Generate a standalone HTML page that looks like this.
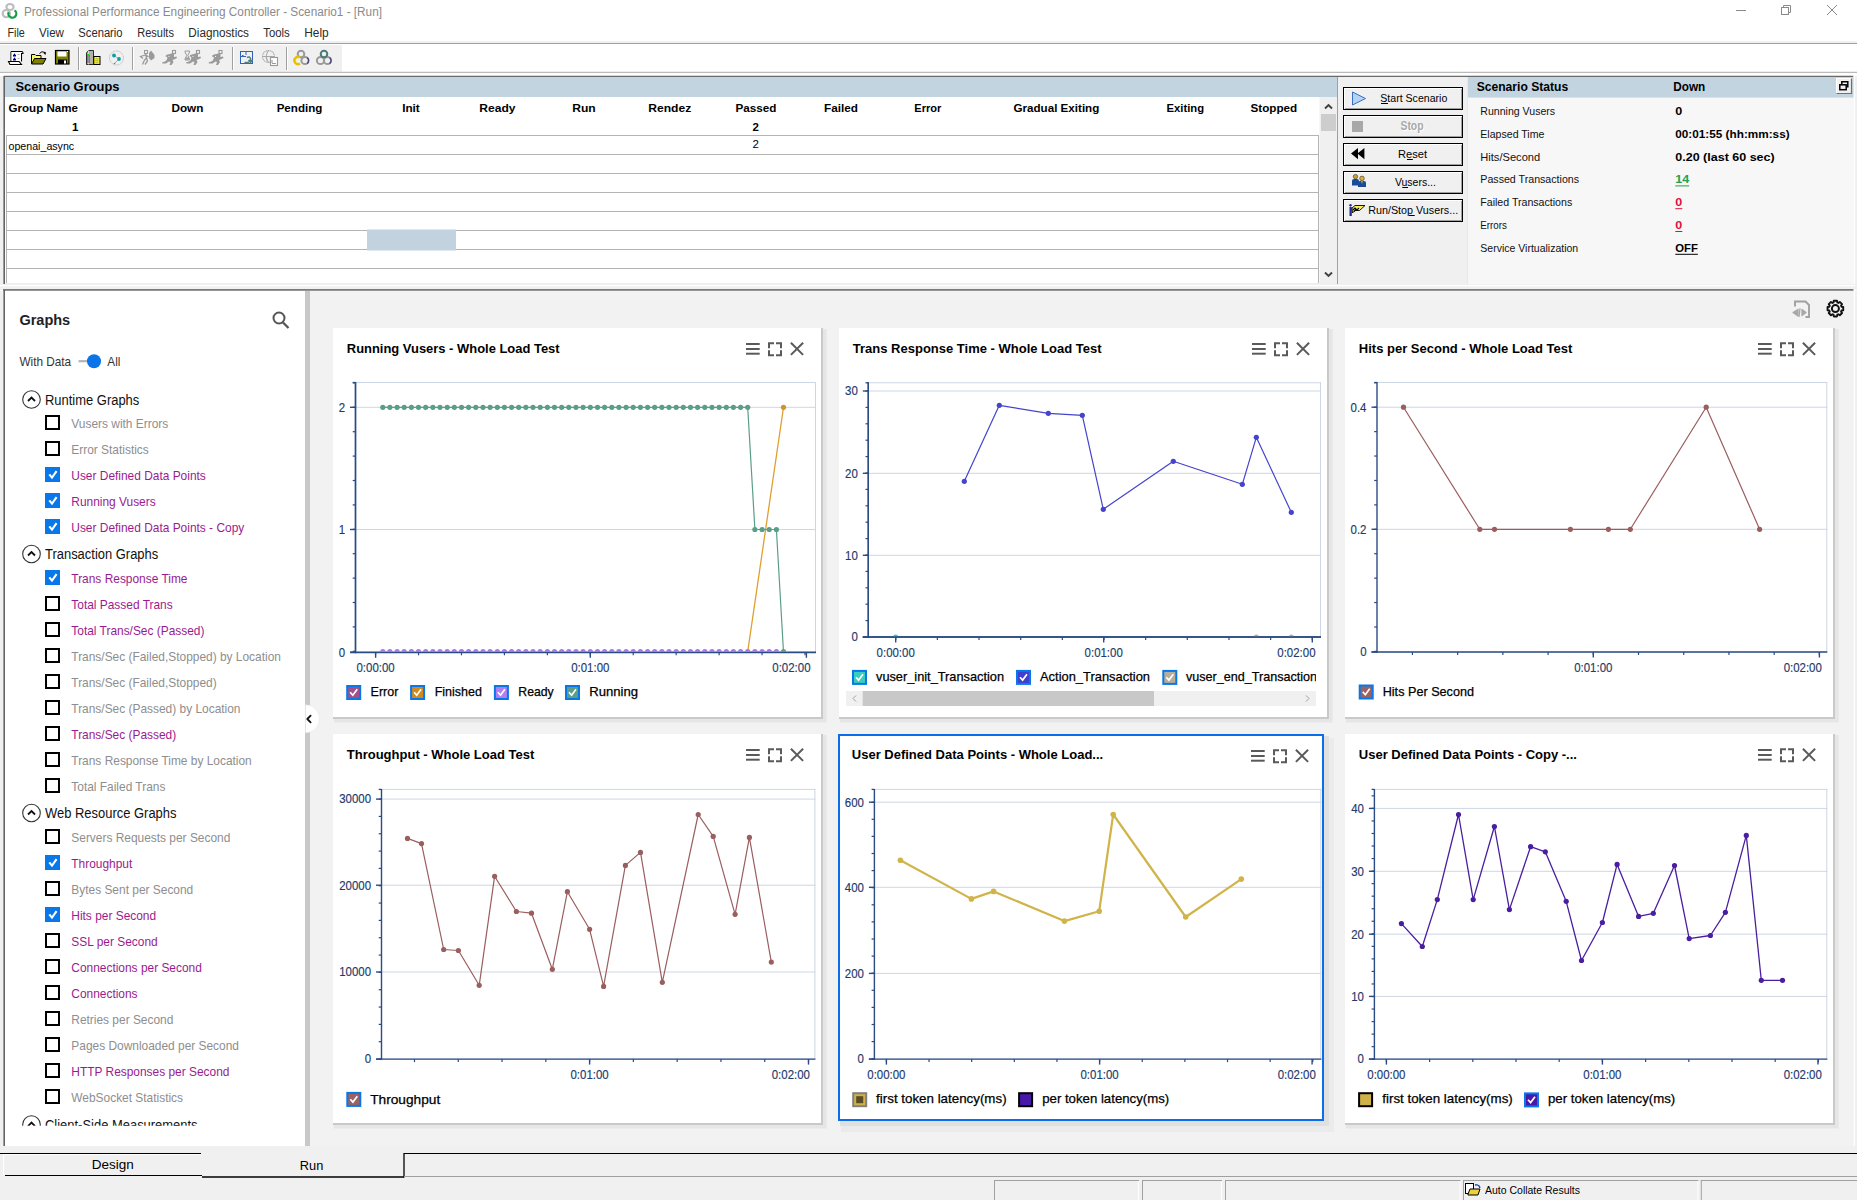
<!DOCTYPE html>
<html><head><meta charset="utf-8"><title>Controller</title>
<style>
html,body{margin:0;padding:0;width:1857px;height:1200px;overflow:hidden;background:#fff;}
svg{display:block;font-family:"Liberation Sans",sans-serif;}
</style></head><body>
<svg width="1857" height="1200" viewBox="0 0 1857 1200">
<rect x="0" y="0" width="1857" height="1200" fill="#ffffff"/>
<g fill="none" stroke-width="2.2"><ellipse cx="10" cy="7" rx="3.6" ry="3" stroke="#bdbdbd"/><circle cx="6.3" cy="13.6" r="3.6" stroke="#bdbdbd"/><path d="M8.6 12.2 A4 4 0 1 0 14.5 10.3" stroke="#10a048"/></g>
<text x="24" y="16" font-size="12.5" fill="#8a8a8a" textLength="358" lengthAdjust="spacingAndGlyphs">Professional Performance Engineering Controller - Scenario1 - [Run]</text>
<line x1="1736" y1="10.5" x2="1746" y2="10.5" stroke="#8a8a8a" stroke-width="1"/>
<g fill="none" stroke="#8a8a8a" stroke-width="1"><rect x="1781.5" y="7.5" width="7" height="7"/><path d="M1783.5 7.5 V5.5 H1790.5 V12.5 H1788.5"/><path d="M1827 5 L1837 15 M1837 5 L1827 15"/></g>
<text x="7.4" y="36.6" font-size="12.5" fill="#2a2a2a" textLength="17.4" lengthAdjust="spacingAndGlyphs">File</text>
<text x="39.1" y="36.6" font-size="12.5" fill="#2a2a2a" textLength="24.8" lengthAdjust="spacingAndGlyphs">View</text>
<text x="78.3" y="36.6" font-size="12.5" fill="#2a2a2a" textLength="44.3" lengthAdjust="spacingAndGlyphs">Scenario</text>
<text x="137.2" y="36.6" font-size="12.5" fill="#2a2a2a" textLength="36.7" lengthAdjust="spacingAndGlyphs">Results</text>
<text x="188.3" y="36.6" font-size="12.5" fill="#2a2a2a" textLength="60.7" lengthAdjust="spacingAndGlyphs">Diagnostics</text>
<text x="263.3" y="36.6" font-size="12.5" fill="#2a2a2a" textLength="26.5" lengthAdjust="spacingAndGlyphs">Tools</text>
<text x="304.2" y="36.6" font-size="12.5" fill="#2a2a2a" textLength="24.5" lengthAdjust="spacingAndGlyphs">Help</text>
<rect x="0" y="41" width="1857" height="2" fill="#f0f0f0"/>
<line x1="0" y1="43.5" x2="1857" y2="43.5" stroke="#a0a0a0" stroke-width="1"/>
<rect x="0" y="45" width="342" height="26.5" fill="#f0f0f0"/>
<line x1="0" y1="72.3" x2="1857" y2="72.3" stroke="#a8a8a8" stroke-width="1"/>
<line x1="78.5" y1="47" x2="78.5" y2="70" stroke="#a0a0a0" stroke-width="1"/>
<line x1="79.5" y1="47" x2="79.5" y2="70" stroke="#ffffff" stroke-width="1"/>
<line x1="132.5" y1="47" x2="132.5" y2="70" stroke="#a0a0a0" stroke-width="1"/>
<line x1="133.5" y1="47" x2="133.5" y2="70" stroke="#ffffff" stroke-width="1"/>
<line x1="232.5" y1="47" x2="232.5" y2="70" stroke="#a0a0a0" stroke-width="1"/>
<line x1="233.5" y1="47" x2="233.5" y2="70" stroke="#ffffff" stroke-width="1"/>
<line x1="286.5" y1="47" x2="286.5" y2="70" stroke="#a0a0a0" stroke-width="1"/>
<line x1="287.5" y1="47" x2="287.5" y2="70" stroke="#ffffff" stroke-width="1"/>
<g><path d="M11 51.5 H21.5 Q23 51.5 23 53 V53.5 H21.5 V61.5" fill="#fff" stroke="#000" stroke-width="1.1"/><path d="M11 51.5 V61" fill="none" stroke="#000" stroke-width="1.1"/><rect x="11.5" y="52" width="9.5" height="9" fill="#fff"/><path d="M8.5 61.5 H19 L21.5 64.5 H10 Z" fill="#fff" stroke="#000" stroke-width="1.1"/><path d="M13 55.5 L14.5 53.3 L16 55.5 Z M13 59.5 L14.5 57.3 L16 59.5 Z" fill="#00008a"/><rect x="13" y="55" width="3" height="1.5" fill="#00008a"/><rect x="13" y="59" width="3" height="1.5" fill="#00008a"/><path d="M17.5 54.5 H19.5 M17.5 58.5 H19.5" stroke="#999" stroke-width="0.8"/><path d="M8 65.5 H23" stroke="#fff" stroke-width="1"/></g>
<g><path d="M31.5 54.5 H35 L36 55.5 H41 V63.5 H31.5 Z" fill="#ffff60" stroke="#000" stroke-width="1"/><path d="M33 55.5 L35 57 M32.5 58 L34 59.5" stroke="#c8c880" stroke-width="0.6"/><path d="M31.5 64 L34.5 58.5 H46 L43 64 Z" fill="#808000" stroke="#000" stroke-width="1"/><path d="M39.5 53.5 Q41.5 50.5 45 52.5" fill="none" stroke="#000" stroke-width="1"/><path d="M43.5 53 L46 52 L45.5 55 Z" fill="#000"/></g>
<g><rect x="55.5" y="50.5" width="13.5" height="13.5" fill="#808000" stroke="#000" stroke-width="1.2"/><rect x="57.5" y="51.5" width="9" height="5" fill="#fff"/><rect x="67" y="51" width="1" height="1" fill="#fff"/><rect x="58" y="59.5" width="9" height="4.5" fill="#000"/><rect x="64" y="60.5" width="2" height="3" fill="#fff"/></g>
<g><path d="M86.5 53 L88.5 50.5 H93.5 V64.5 H86.5 Z" fill="#b0b0b0" stroke="#000" stroke-width="0.8"/><path d="M88.5 50.5 V64.5" stroke="#e0e0e0" stroke-width="0.8"/><path d="M87 56 H90 M87 58 H90 M87 60 H90 M87 62 H90" stroke="#333" stroke-width="0.8"/><rect x="87.3" y="54" width="2" height="1.2" fill="#00e000"/><rect x="93.8" y="56.5" width="6.2" height="8" fill="#ffff00" stroke="#000" stroke-width="1"/><path d="M95.3 58.8 H98.5 M95.3 60.8 H98.5 M95.3 62.8 H98.5" stroke="#888" stroke-width="0.8"/></g>
<g fill="none"><circle cx="116.5" cy="58" r="7" stroke="#b8b8b8" stroke-width="1" stroke-dasharray="1 0.6"/><path d="M114 55.5 L119 59 L114.5 63.5" stroke="#70b0b0" stroke-width="0.8"/><circle cx="114" cy="55.5" r="1.9" fill="#10a0a0"/><circle cx="119" cy="59" r="1.9" fill="#10a0a0"/><circle cx="114.5" cy="63.5" r="0.8" fill="#10a0a0"/></g>
<g transform="translate(140,50)"><rect x="4.5" y="0.5" width="3" height="3" fill="none" stroke="#9a9a9a" stroke-width="1"/><path d="M5.5 4 L6.5 8 L4.5 10 L2.5 14.5 M6.5 8 L7.5 11 L5 14.5 M5.5 5 L0.5 6.5 L3 8.5 M6 5 L8.5 7" fill="none" stroke="#9a9a9a" stroke-width="1.3"/><path d="M11 0.5 L14.5 5 L14.5 8 L11 10.5 L9 8 L9 3 Z" fill="#9a9a9a"/></g>
<g transform="translate(162,50)"><rect x="10.5" y="0.5" width="3" height="3" fill="none" stroke="#9a9a9a" stroke-width="1.1"/><path d="M9.5 3.5 L12 4 L12 7 L14.5 6.5 L15 8 L12 9.5 L10.5 10 L11.5 12 L9.5 15 L7.5 15 L8.5 12 L7 11.5 L4 13.5 L0.5 13.5 L0 12.5 L4 11 L5.5 8 L4.5 6.5 L3.5 7 L4 5 Z" fill="#9a9a9a"/><rect x="6.5" y="6" width="1" height="1" fill="#f0f0f0"/></g>
<g transform="translate(186,50)"><rect x="10.5" y="0.5" width="3" height="3" fill="none" stroke="#9a9a9a" stroke-width="1.1"/><path d="M9.5 3.5 L12 4 L12 7 L14.5 6.5 L15 8 L12 9.5 L10.5 10 L11.5 12 L9.5 15 L7.5 15 L8.5 12 L7 11.5 L4 13.5 L0.5 13.5 L0 12.5 L4 11 L5.5 8 L4.5 6.5 L3.5 7 L4 5 Z" fill="#9a9a9a"/><rect x="6.5" y="6" width="1" height="1" fill="#f0f0f0"/></g>
<g transform="translate(208.5,50)"><rect x="10.5" y="0.5" width="3" height="3" fill="none" stroke="#9a9a9a" stroke-width="1.1"/><path d="M9.5 3.5 L12 4 L12 7 L14.5 6.5 L15 8 L12 9.5 L10.5 10 L11.5 12 L9.5 15 L7.5 15 L8.5 12 L7 11.5 L4 13.5 L0.5 13.5 L0 12.5 L4 11 L5.5 8 L4.5 6.5 L3.5 7 L4 5 Z" fill="#9a9a9a"/><rect x="6.5" y="6" width="1" height="1" fill="#f0f0f0"/></g>
<g fill="#9a9a9a"><path d="M185 51 H189.5 V52 L187.8 55.5 L189.5 59 V60 H185 V59 L186.7 55.5 L185 52 Z" fill="none" stroke="#9a9a9a" stroke-width="1"/><rect x="185.5" y="57.5" width="3.5" height="2"/></g>
<g fill="none"><rect x="240.5" y="51.5" width="12" height="12" stroke="#3060c0" stroke-width="1"/><path d="M240.5 56.5 H246 M246 51.5 V55" stroke="#3060c0" stroke-width="1"/><rect x="242" y="55" width="1.5" height="1.5" fill="#3060c0"/><path d="M244.5 62.5 H249 M247 57.5 Q249.5 56 250.5 58.5 V62 M252.5 60 L250.5 62.5 L248.5 60" stroke="#508080" stroke-width="1.6"/></g>
<g fill="none" stroke="#a8a8a8" stroke-width="1.1"><circle cx="268.5" cy="56.5" r="6" stroke-dasharray="1.2 0.6"/><path d="M268.5 50.5 Q264 56.5 268.5 62.5 M263 56.5 H274"/><rect x="270.5" y="57.5" width="7" height="8" fill="#fff" stroke="#999"/><path d="M272 63.5 H276 M272 60 V63" stroke="#999"/></g>
<g fill="none" stroke-width="2"><circle cx="301" cy="54" r="3.3" stroke="#9a9a9a"/><circle cx="305" cy="60.5" r="3.6" stroke="#9a9a9a"/><path d="M300 57.5 A3.6 3.6 0 1 0 300 63.5" stroke="#e8c000" stroke-width="2.4"/><path d="M307 57.5 A3.6 3.6 0 0 1 307 63.5" stroke="#404080" stroke-width="1.2"/></g>
<g fill="none" stroke-width="2"><circle cx="320.5" cy="60.5" r="3.6" stroke="#9a9a9a"/><circle cx="327.5" cy="60.5" r="3.6" stroke="#9a9a9a"/><path d="M329.5 57.5 A3.6 3.6 0 0 1 329.5 63.5" stroke="#404080" stroke-width="1.2"/><circle cx="324" cy="54" r="3.3" stroke="#4a7a7a"/></g>
<rect x="0" y="76" width="1857" height="214" fill="#f0f0f0"/>
<rect x="0" y="73" width="1857" height="3" fill="#ffffff"/>
<line x1="4" y1="76.3" x2="1853.5" y2="76.3" stroke="#6a6a6a" stroke-width="1.3"/>
<rect x="1853.5" y="76" width="1.5" height="214" fill="#ffffff"/>
<line x1="4.2" y1="76" x2="4.2" y2="284" stroke="#646464" stroke-width="1.6"/>
<rect x="5" y="77" width="1333" height="206" fill="#ffffff"/>
<rect x="5" y="77" width="1333" height="20" fill="#c2d4e0"/>
<text x="15.5" y="90.8" font-size="13" fill="#000" font-weight="bold" textLength="104" lengthAdjust="spacingAndGlyphs">Scenario Groups</text>
<text x="8.5" y="112.3" font-size="11.5" fill="#000" font-weight="bold" textLength="69.5" lengthAdjust="spacingAndGlyphs">Group Name</text>
<text x="187.4" y="112.3" font-size="11.5" fill="#000" font-weight="bold" text-anchor="middle" textLength="32" lengthAdjust="spacingAndGlyphs">Down</text>
<text x="299.5" y="112.3" font-size="11.5" fill="#000" font-weight="bold" text-anchor="middle" textLength="45.7" lengthAdjust="spacingAndGlyphs">Pending</text>
<text x="411" y="112.3" font-size="11.5" fill="#000" font-weight="bold" text-anchor="middle" textLength="17.6" lengthAdjust="spacingAndGlyphs">Init</text>
<text x="497.4" y="112.3" font-size="11.5" fill="#000" font-weight="bold" text-anchor="middle" textLength="36.2" lengthAdjust="spacingAndGlyphs">Ready</text>
<text x="584" y="112.3" font-size="11.5" fill="#000" font-weight="bold" text-anchor="middle" textLength="23.5" lengthAdjust="spacingAndGlyphs">Run</text>
<text x="669.7" y="112.3" font-size="11.5" fill="#000" font-weight="bold" text-anchor="middle" textLength="43" lengthAdjust="spacingAndGlyphs">Rendez</text>
<text x="755.9" y="112.3" font-size="11.5" fill="#000" font-weight="bold" text-anchor="middle" textLength="41" lengthAdjust="spacingAndGlyphs">Passed</text>
<text x="841" y="112.3" font-size="11.5" fill="#000" font-weight="bold" text-anchor="middle" textLength="34" lengthAdjust="spacingAndGlyphs">Failed</text>
<text x="927.8" y="112.3" font-size="11.5" fill="#000" font-weight="bold" text-anchor="middle" textLength="27" lengthAdjust="spacingAndGlyphs">Error</text>
<text x="1056.4" y="112.3" font-size="11.5" fill="#000" font-weight="bold" text-anchor="middle" textLength="85.8" lengthAdjust="spacingAndGlyphs">Gradual Exiting</text>
<text x="1185.3" y="112.3" font-size="11.5" fill="#000" font-weight="bold" text-anchor="middle" textLength="37.5" lengthAdjust="spacingAndGlyphs">Exiting</text>
<text x="1273.9" y="112.3" font-size="11.5" fill="#000" font-weight="bold" text-anchor="middle" textLength="46.7" lengthAdjust="spacingAndGlyphs">Stopped</text>
<text x="75.3" y="130.7" font-size="11.5" fill="#000" font-weight="bold" text-anchor="middle">1</text>
<text x="755.6" y="130.9" font-size="11.5" fill="#000" font-weight="bold" text-anchor="middle">2</text>
<line x1="6.5" y1="135.5" x2="1318.5" y2="135.5" stroke="#b4b4b4" stroke-width="1"/>
<line x1="6.5" y1="154.5" x2="1318.5" y2="154.5" stroke="#b4b4b4" stroke-width="1"/>
<line x1="6.5" y1="173.5" x2="1318.5" y2="173.5" stroke="#b4b4b4" stroke-width="1"/>
<line x1="6.5" y1="192.5" x2="1318.5" y2="192.5" stroke="#b4b4b4" stroke-width="1"/>
<line x1="6.5" y1="211.5" x2="1318.5" y2="211.5" stroke="#b4b4b4" stroke-width="1"/>
<line x1="6.5" y1="230.5" x2="1318.5" y2="230.5" stroke="#b4b4b4" stroke-width="1"/>
<line x1="6.5" y1="249.5" x2="1318.5" y2="249.5" stroke="#b4b4b4" stroke-width="1"/>
<line x1="6.5" y1="268.5" x2="1318.5" y2="268.5" stroke="#b4b4b4" stroke-width="1"/>
<line x1="6.5" y1="135" x2="6.5" y2="283" stroke="#b4b4b4" stroke-width="1"/>
<line x1="1318.5" y1="135" x2="1318.5" y2="283" stroke="#b4b4b4" stroke-width="1"/>
<rect x="367" y="229.5" width="89" height="21" fill="#c2d3df"/>
<text x="8.5" y="150.2" font-size="11.5" fill="#000" textLength="65.7" lengthAdjust="spacingAndGlyphs">openai_async</text>
<text x="755.6" y="147.6" font-size="11.5" fill="#000" text-anchor="middle">2</text>
<rect x="1319.5" y="97" width="17.5" height="186" fill="#f0f0f0"/>
<rect x="1321" y="114" width="15" height="17" fill="#cdcdcd"/>
<path d="M1325 108.5 L1328.5 105 L1332 108.5" fill="none" stroke="#404040" stroke-width="1.9"/>
<path d="M1325 272.5 L1328.5 276 L1332 272.5" fill="none" stroke="#404040" stroke-width="1.9"/>
<rect x="5" y="283" width="1333" height="3" fill="#eeeeee"/>
<line x1="1337.5" y1="77" x2="1337.5" y2="285" stroke="#a0a0a0" stroke-width="1"/>
<rect x="1343.5" y="87.5" width="119" height="22" fill="#f0f0f0" stroke="#000" stroke-width="1"/>
<line x1="1344.5" y1="88.5" x2="1461.5" y2="88.5" stroke="#ffffff" stroke-width="1"/>
<line x1="1344.5" y1="88.5" x2="1344.5" y2="108.5" stroke="#ffffff" stroke-width="1"/>
<line x1="1345" y1="108.5" x2="1461.5" y2="108.5" stroke="#a0a0a0" stroke-width="1"/>
<line x1="1461.5" y1="89" x2="1461.5" y2="108.5" stroke="#a0a0a0" stroke-width="1"/>
<text x="1413.8" y="102" font-size="11.5" fill="#000" text-anchor="middle" textLength="67" lengthAdjust="spacingAndGlyphs">Start Scenario</text>
<path d="M1352.5 92 L1365.5 98.5 L1352.5 105 Z" fill="#b4d2f4" stroke="#3a70c0" stroke-width="1" stroke-linejoin="round"/>
<line x1="1381" y1="103.5" x2="1388" y2="103.5" stroke="#000" stroke-width="1"/>
<rect x="1343.5" y="115.5" width="119" height="22" fill="#f0f0f0" stroke="#000" stroke-width="1"/>
<line x1="1344.5" y1="116.5" x2="1461.5" y2="116.5" stroke="#ffffff" stroke-width="1"/>
<line x1="1344.5" y1="116.5" x2="1344.5" y2="136.5" stroke="#ffffff" stroke-width="1"/>
<line x1="1345" y1="136.5" x2="1461.5" y2="136.5" stroke="#a0a0a0" stroke-width="1"/>
<line x1="1461.5" y1="117" x2="1461.5" y2="136.5" stroke="#a0a0a0" stroke-width="1"/>
<text x="1413" y="131" font-size="12" fill="#ffffff" font-weight="bold" text-anchor="middle" textLength="23" lengthAdjust="spacingAndGlyphs">Stop</text>
<text x="1412" y="130" font-size="12" fill="#a8a8a8" font-weight="bold" text-anchor="middle" textLength="23" lengthAdjust="spacingAndGlyphs">Stop</text>
<rect x="1352" y="121" width="11" height="11" fill="#a8a8a8"/>
<rect x="1343.5" y="143.5" width="119" height="22" fill="#f0f0f0" stroke="#000" stroke-width="1"/>
<line x1="1344.5" y1="144.5" x2="1461.5" y2="144.5" stroke="#ffffff" stroke-width="1"/>
<line x1="1344.5" y1="144.5" x2="1344.5" y2="164.5" stroke="#ffffff" stroke-width="1"/>
<line x1="1345" y1="164.5" x2="1461.5" y2="164.5" stroke="#a0a0a0" stroke-width="1"/>
<line x1="1461.5" y1="145" x2="1461.5" y2="164.5" stroke="#a0a0a0" stroke-width="1"/>
<text x="1412.5" y="158" font-size="11.5" fill="#000" text-anchor="middle" textLength="29" lengthAdjust="spacingAndGlyphs">Reset</text>
<path d="M1358 148 L1351 153.6 L1358 159.3 Z M1364.4 148 L1357.4 153.6 L1364.4 159.3 Z" fill="#000"/>
<line x1="1407" y1="159.5" x2="1412.8" y2="159.5" stroke="#000" stroke-width="1"/>
<rect x="1343.5" y="171.5" width="119" height="22" fill="#f0f0f0" stroke="#000" stroke-width="1"/>
<line x1="1344.5" y1="172.5" x2="1461.5" y2="172.5" stroke="#ffffff" stroke-width="1"/>
<line x1="1344.5" y1="172.5" x2="1344.5" y2="192.5" stroke="#ffffff" stroke-width="1"/>
<line x1="1345" y1="192.5" x2="1461.5" y2="192.5" stroke="#a0a0a0" stroke-width="1"/>
<line x1="1461.5" y1="173" x2="1461.5" y2="192.5" stroke="#a0a0a0" stroke-width="1"/>
<text x="1415.4" y="186" font-size="11.5" fill="#000" text-anchor="middle" textLength="41" lengthAdjust="spacingAndGlyphs">Vusers...</text>
<g><path d="M1352 185.5 V180.5 Q1352 179 1354 179 H1357 Q1359 179 1359 180.5 V185.5 Z" fill="#1a4a9a"/><circle cx="1355.5" cy="176.6" r="2.2" fill="#c8a030" stroke="#403010" stroke-width="0.6"/><path d="M1358 187 V182.5 Q1358 181 1360 181 H1364 Q1366 181 1366 182.5 V187 Z" fill="#1a4a9a"/><circle cx="1362" cy="178.4" r="2.3" fill="#d8b040" stroke="#403010" stroke-width="0.6"/><path d="M1361.2 181 L1362 184 L1362.8 181 Z" fill="#e8c040"/></g>
<line x1="1402.3" y1="187.5" x2="1408" y2="187.5" stroke="#000" stroke-width="1"/>
<rect x="1343.5" y="199.5" width="119" height="22" fill="#f0f0f0" stroke="#000" stroke-width="1"/>
<line x1="1344.5" y1="200.5" x2="1461.5" y2="200.5" stroke="#ffffff" stroke-width="1"/>
<line x1="1344.5" y1="200.5" x2="1344.5" y2="220.5" stroke="#ffffff" stroke-width="1"/>
<line x1="1345" y1="220.5" x2="1461.5" y2="220.5" stroke="#a0a0a0" stroke-width="1"/>
<line x1="1461.5" y1="201" x2="1461.5" y2="220.5" stroke="#a0a0a0" stroke-width="1"/>
<text x="1413.2" y="214" font-size="11.5" fill="#000" text-anchor="middle" textLength="90" lengthAdjust="spacingAndGlyphs">Run/Stop Vusers...</text>
<g><circle cx="1350.5" cy="205.2" r="1.2" fill="#1a2a9a"/><path d="M1349.5 207 H1351.8 V216 H1349.5 Z" fill="#1a2a9a"/><path d="M1352 208 L1355 205.5 H1365 L1359.5 210.5 H1355 L1352.5 213 Z" fill="#f8f060" stroke="#000" stroke-width="0.9"/><path d="M1353 210 L1355 208 L1357 210 L1359 208 M1354 211.5 L1356 209.5" stroke="#000" stroke-width="1.1" fill="none"/></g>
<line x1="1409" y1="215.5" x2="1414.7" y2="215.5" stroke="#000" stroke-width="1"/>
<rect x="1468" y="77" width="385.5" height="207" fill="#f7f7f7"/>
<rect x="1468" y="77" width="385.5" height="20.6" fill="#c2d4e0"/>
<line x1="1467.5" y1="77" x2="1467.5" y2="284" stroke="#e8e8e8" stroke-width="1"/>
<text x="1476.7" y="91" font-size="12.5" fill="#000" font-weight="bold" textLength="91.5" lengthAdjust="spacingAndGlyphs">Scenario Status</text>
<text x="1673.3" y="91" font-size="12.5" fill="#000" font-weight="bold" textLength="32" lengthAdjust="spacingAndGlyphs">Down</text>
<g fill="none" stroke="#000" stroke-width="1"><rect x="1836" y="78" width="16" height="16" fill="#f0f0f0" stroke="none"/><path d="M1836.5 93.5 V78.5 H1851.5" stroke="#ffffff"/><path d="M1836.5 93.5 H1851.5 V78.5" stroke="#707070" stroke-width="1.2"/><rect x="1839.8" y="84.8" width="6.4" height="4.9" stroke-width="1.5"/><path d="M1841.8 84.5 V81.8 H1847.8 V86.8 H1846.5" stroke-width="1.5"/></g>
<text x="1480.3" y="115.0" font-size="11.5" fill="#111" textLength="74.8" lengthAdjust="spacingAndGlyphs">Running Vusers</text>
<text x="1675.3" y="115.0" font-size="11.5" fill="#000" font-weight="bold" textLength="7" lengthAdjust="spacingAndGlyphs">0</text>
<text x="1480.3" y="137.8" font-size="11.5" fill="#111" textLength="64.1" lengthAdjust="spacingAndGlyphs">Elapsed Time</text>
<text x="1675.3" y="137.8" font-size="11.5" fill="#000" font-weight="bold" textLength="114.3" lengthAdjust="spacingAndGlyphs">00:01:55 (hh:mm:ss)</text>
<text x="1480.3" y="160.6" font-size="11.5" fill="#111" textLength="59.9" lengthAdjust="spacingAndGlyphs">Hits/Second</text>
<text x="1675.3" y="160.6" font-size="11.5" fill="#000" font-weight="bold" textLength="99.4" lengthAdjust="spacingAndGlyphs">0.20 (last 60 sec)</text>
<text x="1480.3" y="183.4" font-size="11.5" fill="#111" textLength="98.8" lengthAdjust="spacingAndGlyphs">Passed Transactions</text>
<text x="1675.3" y="183.4" font-size="11.5" fill="#22a050" font-weight="bold" textLength="13.9" lengthAdjust="spacingAndGlyphs">14</text>
<line x1="1675.3" y1="185.9" x2="1689.2" y2="185.9" stroke="#22a050" stroke-width="1"/>
<text x="1480.3" y="206.2" font-size="11.5" fill="#111" textLength="91.9" lengthAdjust="spacingAndGlyphs">Failed Transactions</text>
<text x="1675.3" y="206.2" font-size="11.5" fill="#e0103a" font-weight="bold" textLength="7" lengthAdjust="spacingAndGlyphs">0</text>
<line x1="1675.3" y1="208.7" x2="1682.3" y2="208.7" stroke="#e0103a" stroke-width="1"/>
<text x="1480.3" y="229.0" font-size="11.5" fill="#111" textLength="26.7" lengthAdjust="spacingAndGlyphs">Errors</text>
<text x="1675.3" y="229.0" font-size="11.5" fill="#e0103a" font-weight="bold" textLength="7" lengthAdjust="spacingAndGlyphs">0</text>
<line x1="1675.3" y1="231.5" x2="1682.3" y2="231.5" stroke="#e0103a" stroke-width="1"/>
<text x="1480.3" y="251.8" font-size="11.5" fill="#111" textLength="97.9" lengthAdjust="spacingAndGlyphs">Service Virtualization</text>
<text x="1675.3" y="251.8" font-size="11.5" fill="#000" font-weight="bold" textLength="22.6" lengthAdjust="spacingAndGlyphs">OFF</text>
<line x1="1675.3" y1="254.3" x2="1697.8999999999999" y2="254.3" stroke="#000" stroke-width="1"/>
<rect x="0" y="284" width="1857" height="5" fill="#f0f0f0"/>
<line x1="0" y1="285.6" x2="1855" y2="285.6" stroke="#ffffff" stroke-width="1.2"/>
<line x1="3" y1="290" x2="1853.5" y2="290" stroke="#555555" stroke-width="1.6"/>
<rect x="0" y="290.8" width="1857" height="861.2" fill="#f0f0f0"/>
<rect x="4" y="291" width="301" height="855" fill="#ffffff"/>
<line x1="4.2" y1="290" x2="4.2" y2="1146" stroke="#646464" stroke-width="1.6"/>
<rect x="305" y="291" width="5" height="855" fill="#c8c8c8"/>
<text x="19.4" y="325" font-size="14.5" fill="#222" font-weight="bold">Graphs</text>
<g fill="none" stroke="#555" stroke-width="2"><circle cx="279" cy="318" r="5.5"/><path d="M283 322.5 L288.5 328" stroke-width="2.3"/></g>
<text x="19.4" y="365.7" font-size="13" fill="#333" textLength="51.76" lengthAdjust="spacingAndGlyphs">With Data</text>
<line x1="78.5" y1="361.2" x2="92" y2="361.2" stroke="#b4b4b4" stroke-width="2.2"/>
<circle cx="94" cy="361.2" r="7" fill="#0a74e8"/>
<text x="107.3" y="365.7" font-size="13" fill="#333" textLength="13.1" lengthAdjust="spacingAndGlyphs">All</text>
<circle cx="31.5" cy="399.5" r="8.8" fill="#fff" stroke="#333" stroke-width="1.1"/>
<path d="M28 401.0 L31.5 397.5 L35 401.0" fill="none" stroke="#111" stroke-width="1.8"/>
<text x="45" y="404.5" font-size="14" fill="#111" textLength="94.29" lengthAdjust="spacingAndGlyphs">Runtime Graphs</text>
<rect x="46" y="416" width="13" height="13" fill="#fff" stroke="#000" stroke-width="2"/>
<text x="71.3" y="428" font-size="13" fill="#8e8e8e" textLength="96.94" lengthAdjust="spacingAndGlyphs">Vusers with Errors</text>
<rect x="46" y="442" width="13" height="13" fill="#fff" stroke="#000" stroke-width="2"/>
<text x="71.3" y="454" font-size="13" fill="#8e8e8e" textLength="77.5" lengthAdjust="spacingAndGlyphs">Error Statistics</text>
<rect x="45" y="467" width="15" height="15" fill="#0877ea"/>
<path d="M49.3 474.3 L52 477.6 L56.6 471.2" fill="none" stroke="#fff" stroke-width="2.1"/>
<text x="71.3" y="480" font-size="13" fill="#9b1b8f" textLength="134.51" lengthAdjust="spacingAndGlyphs">User Defined Data Points</text>
<rect x="45" y="493" width="15" height="15" fill="#0877ea"/>
<path d="M49.3 500.3 L52 503.6 L56.6 497.2" fill="none" stroke="#fff" stroke-width="2.1"/>
<text x="71.3" y="506" font-size="13" fill="#9b1b8f" textLength="84.38" lengthAdjust="spacingAndGlyphs">Running Vusers</text>
<rect x="45" y="519" width="15" height="15" fill="#0877ea"/>
<path d="M49.3 526.3 L52 529.6 L56.6 523.2" fill="none" stroke="#fff" stroke-width="2.1"/>
<text x="71.3" y="532" font-size="13" fill="#9b1b8f" textLength="172.93" lengthAdjust="spacingAndGlyphs">User Defined Data Points - Copy</text>
<circle cx="31.5" cy="554" r="8.8" fill="#fff" stroke="#333" stroke-width="1.1"/>
<path d="M28 555.5 L31.5 552 L35 555.5" fill="none" stroke="#111" stroke-width="1.8"/>
<text x="45" y="559" font-size="14" fill="#111" textLength="113.25" lengthAdjust="spacingAndGlyphs">Transaction Graphs</text>
<rect x="45" y="570" width="15" height="15" fill="#0877ea"/>
<path d="M49.3 577.3 L52 580.6 L56.6 574.2" fill="none" stroke="#fff" stroke-width="2.1"/>
<text x="71.3" y="583" font-size="13" fill="#9b1b8f" textLength="116.17" lengthAdjust="spacingAndGlyphs">Trans Response Time</text>
<rect x="46" y="597" width="13" height="13" fill="#fff" stroke="#000" stroke-width="2"/>
<text x="71.3" y="609" font-size="13" fill="#9b1b8f" textLength="101.38" lengthAdjust="spacingAndGlyphs">Total Passed Trans</text>
<rect x="46" y="623" width="13" height="13" fill="#fff" stroke="#000" stroke-width="2"/>
<text x="71.3" y="635" font-size="13" fill="#9b1b8f" textLength="133.18" lengthAdjust="spacingAndGlyphs">Total Trans/Sec (Passed)</text>
<rect x="46" y="649" width="13" height="13" fill="#fff" stroke="#000" stroke-width="2"/>
<text x="71.3" y="661" font-size="13" fill="#8e8e8e" textLength="209.62" lengthAdjust="spacingAndGlyphs">Trans/Sec (Failed,Stopped) by Location</text>
<rect x="46" y="675" width="13" height="13" fill="#fff" stroke="#000" stroke-width="2"/>
<text x="71.3" y="687" font-size="13" fill="#8e8e8e" textLength="145.33" lengthAdjust="spacingAndGlyphs">Trans/Sec (Failed,Stopped)</text>
<rect x="46" y="701" width="13" height="13" fill="#fff" stroke="#000" stroke-width="2"/>
<text x="71.3" y="713" font-size="13" fill="#8e8e8e" textLength="169.19" lengthAdjust="spacingAndGlyphs">Trans/Sec (Passed) by Location</text>
<rect x="46" y="727" width="13" height="13" fill="#fff" stroke="#000" stroke-width="2"/>
<text x="71.3" y="739" font-size="13" fill="#9b1b8f" textLength="104.9" lengthAdjust="spacingAndGlyphs">Trans/Sec (Passed)</text>
<rect x="46" y="753" width="13" height="13" fill="#fff" stroke="#000" stroke-width="2"/>
<text x="71.3" y="765" font-size="13" fill="#8e8e8e" textLength="180.46" lengthAdjust="spacingAndGlyphs">Trans Response Time by Location</text>
<rect x="46" y="779" width="13" height="13" fill="#fff" stroke="#000" stroke-width="2"/>
<text x="71.3" y="791" font-size="13" fill="#8e8e8e" textLength="94.09" lengthAdjust="spacingAndGlyphs">Total Failed Trans</text>
<circle cx="31.5" cy="813" r="8.8" fill="#fff" stroke="#333" stroke-width="1.1"/>
<path d="M28 814.5 L31.5 811 L35 814.5" fill="none" stroke="#111" stroke-width="1.8"/>
<text x="45" y="818" font-size="14" fill="#111" textLength="131.48" lengthAdjust="spacingAndGlyphs">Web Resource Graphs</text>
<rect x="46" y="830" width="13" height="13" fill="#fff" stroke="#000" stroke-width="2"/>
<text x="71.3" y="842" font-size="13" fill="#8e8e8e" textLength="159.03" lengthAdjust="spacingAndGlyphs">Servers Requests per Second</text>
<rect x="45" y="855" width="15" height="15" fill="#0877ea"/>
<path d="M49.3 862.3 L52 865.6 L56.6 859.2" fill="none" stroke="#fff" stroke-width="2.1"/>
<text x="71.3" y="868" font-size="13" fill="#9b1b8f" textLength="60.97" lengthAdjust="spacingAndGlyphs">Throughput</text>
<rect x="46" y="882" width="13" height="13" fill="#fff" stroke="#000" stroke-width="2"/>
<text x="71.3" y="894" font-size="13" fill="#8e8e8e" textLength="121.94" lengthAdjust="spacingAndGlyphs">Bytes Sent per Second</text>
<rect x="45" y="907" width="15" height="15" fill="#0877ea"/>
<path d="M49.3 914.3 L52 917.6 L56.6 911.2" fill="none" stroke="#fff" stroke-width="2.1"/>
<text x="71.3" y="920" font-size="13" fill="#9b1b8f" textLength="84.82" lengthAdjust="spacingAndGlyphs">Hits per Second</text>
<rect x="46" y="934" width="13" height="13" fill="#fff" stroke="#000" stroke-width="2"/>
<text x="71.3" y="946" font-size="13" fill="#9b1b8f" textLength="86.38" lengthAdjust="spacingAndGlyphs">SSL per Second</text>
<rect x="46" y="960" width="13" height="13" fill="#fff" stroke="#000" stroke-width="2"/>
<text x="71.3" y="972" font-size="13" fill="#9b1b8f" textLength="130.56" lengthAdjust="spacingAndGlyphs">Connections per Second</text>
<rect x="46" y="986" width="13" height="13" fill="#fff" stroke="#000" stroke-width="2"/>
<text x="71.3" y="998" font-size="13" fill="#9b1b8f" textLength="66.27" lengthAdjust="spacingAndGlyphs">Connections</text>
<rect x="46" y="1012" width="13" height="13" fill="#fff" stroke="#000" stroke-width="2"/>
<text x="71.3" y="1024" font-size="13" fill="#8e8e8e" textLength="102.05" lengthAdjust="spacingAndGlyphs">Retries per Second</text>
<rect x="46" y="1038" width="13" height="13" fill="#fff" stroke="#000" stroke-width="2"/>
<text x="71.3" y="1050" font-size="13" fill="#8e8e8e" textLength="167.68" lengthAdjust="spacingAndGlyphs">Pages Downloaded per Second</text>
<rect x="46" y="1064" width="13" height="13" fill="#fff" stroke="#000" stroke-width="2"/>
<text x="71.3" y="1076" font-size="13" fill="#9b1b8f" textLength="158.15" lengthAdjust="spacingAndGlyphs">HTTP Responses per Second</text>
<rect x="46" y="1090" width="13" height="13" fill="#fff" stroke="#000" stroke-width="2"/>
<text x="71.3" y="1102" font-size="13" fill="#8e8e8e" textLength="111.75" lengthAdjust="spacingAndGlyphs">WebSocket Statistics</text>
<clipPath id="clipL"><rect x="4" y="1100" width="301" height="25.8"/></clipPath>
<g clip-path="url(#clipL)">
<circle cx="31.5" cy="1124.6" r="8.8" fill="#fff" stroke="#333" stroke-width="1.1"/>
<path d="M28 1126.1 L31.5 1122.6 L35 1126.1" fill="none" stroke="#111" stroke-width="1.8"/>
<text x="45" y="1129.6" font-size="14" fill="#111" textLength="152.59" lengthAdjust="spacingAndGlyphs">Client-Side Measurements</text>
</g>
<rect x="310" y="291" width="1543.7" height="855.7" fill="#f2f2f2"/>
<line x1="1854.3" y1="291" x2="1854.3" y2="1148" stroke="#ffffff" stroke-width="1.2"/>
<line x1="4" y1="1147.5" x2="1855" y2="1147.5" stroke="#ffffff" stroke-width="1.2"/>
<path d="M305.5 704.8 A14 14 0 0 1 305.5 732.8 Z" fill="#ffffff"/>
<path d="M305.5 704.8 A14 14 0 0 1 305.5 732.8" fill="none" stroke="#e8e8e8" stroke-width="0.6"/>
<path d="M310.6 715.6 L307.3 719 L310.6 722.3" fill="none" stroke="#111" stroke-width="1.8" stroke-linecap="round" stroke-linejoin="round"/>
<g fill="none" stroke="#a0a0a0" stroke-width="1.9" stroke-linejoin="miter"><path d="M1795 306.5 V301.5 H1805.5 L1809 305 V317 H1805.5"/></g>
<g fill="#a8a8a8" stroke="#a8a8a8" stroke-width="1.3" stroke-linejoin="round"><path d="M1798 309.5 L1793 312.5 L1798 316 Z"/><path d="M1802 309.5 L1806 312.5 L1802 315.5 Z"/><path d="M1800 308.2 L1799 317" fill="none"/></g>
<polygon points="1833.51,302.49 1833.81,300.76 1836.99,300.76 1837.29,302.49 1838.39,302.94 1839.82,301.93 1842.07,304.18 1841.06,305.61 1841.51,306.71 1843.24,307.01 1843.24,310.19 1841.51,310.49 1841.06,311.59 1842.07,313.02 1839.82,315.27 1838.39,314.26 1837.29,314.71 1836.99,316.44 1833.81,316.44 1833.51,314.71 1832.41,314.26 1830.98,315.27 1828.73,313.02 1829.74,311.59 1829.29,310.49 1827.56,310.19 1827.56,307.01 1829.29,306.71 1829.74,305.61 1828.73,304.18 1830.98,301.93 1832.41,302.94" fill="none" stroke="#111" stroke-width="1.9" stroke-linejoin="round"/>
<circle cx="1835.4" cy="308.6" r="3.5" fill="none" stroke="#111" stroke-width="2"/>
<rect x="334" y="329" width="492.75" height="393.5" fill="#e6e6e6"/>
<rect x="333" y="328" width="490" height="391" fill="#c9c9c9"/>
<rect x="333" y="328" width="488" height="389" fill="#ffffff"/>
<text x="346.8" y="352.7" font-size="13" fill="#000" font-weight="bold" textLength="212.8" lengthAdjust="spacingAndGlyphs">Running Vusers - Whole Load Test</text>
<line x1="746" y1="344" x2="759.7" y2="344" stroke="#5a5a5a" stroke-width="2"/>
<line x1="746" y1="349" x2="759.7" y2="349" stroke="#5a5a5a" stroke-width="2"/>
<line x1="746" y1="353.7" x2="759.7" y2="353.7" stroke="#5a5a5a" stroke-width="2"/>
<path d="M769 348.2 V343.2 H774 M776 343.2 H781 V348.2 M781 350.2 V355.2 H776 M774 355.2 H769 V350.2" fill="none" stroke="#5a5a5a" stroke-width="2"/>
<path d="M790.9 342.7 L803.1 354.9 M803.1 342.7 L790.9 354.9" fill="none" stroke="#5a5a5a" stroke-width="2"/>
<clipPath id="c1"><rect x="355.5" y="382" width="460" height="269.95"/></clipPath>
<line x1="355.5" y1="382.5" x2="816" y2="382.5" stroke="#cdd6e4" stroke-width="1"/>
<line x1="815.5" y1="382" x2="815.5" y2="652.3" stroke="#cdd6e4" stroke-width="1"/>
<line x1="355.5" y1="407.3" x2="816" y2="407.3" stroke="#cdd6e4" stroke-width="1"/>
<line x1="355.5" y1="529.5" x2="816" y2="529.5" stroke="#cdd6e4" stroke-width="1"/>
<line x1="355.5" y1="652.3" x2="816" y2="652.3" stroke="#cdd6e4" stroke-width="1"/>
<line x1="352.7" y1="382.90000000000003" x2="355.5" y2="382.90000000000003" stroke="#2b4b85" stroke-width="1.2"/>
<line x1="352.7" y1="407.3" x2="355.5" y2="407.3" stroke="#2b4b85" stroke-width="1.2"/>
<line x1="352.7" y1="431.7" x2="355.5" y2="431.7" stroke="#2b4b85" stroke-width="1.2"/>
<line x1="352.7" y1="456.1" x2="355.5" y2="456.1" stroke="#2b4b85" stroke-width="1.2"/>
<line x1="352.7" y1="480.5" x2="355.5" y2="480.5" stroke="#2b4b85" stroke-width="1.2"/>
<line x1="352.7" y1="504.9" x2="355.5" y2="504.9" stroke="#2b4b85" stroke-width="1.2"/>
<line x1="352.7" y1="529.3" x2="355.5" y2="529.3" stroke="#2b4b85" stroke-width="1.2"/>
<line x1="352.7" y1="553.7" x2="355.5" y2="553.7" stroke="#2b4b85" stroke-width="1.2"/>
<line x1="352.7" y1="578.1" x2="355.5" y2="578.1" stroke="#2b4b85" stroke-width="1.2"/>
<line x1="352.7" y1="602.5" x2="355.5" y2="602.5" stroke="#2b4b85" stroke-width="1.2"/>
<line x1="352.7" y1="626.9" x2="355.5" y2="626.9" stroke="#2b4b85" stroke-width="1.2"/>
<line x1="352.7" y1="651.3" x2="355.5" y2="651.3" stroke="#2b4b85" stroke-width="1.2"/>
<line x1="350.0" y1="407.3" x2="355.5" y2="407.3" stroke="#2b4b85" stroke-width="1.4"/>
<text x="345.0" y="411.6" font-size="12.3" fill="#22396a" text-anchor="end" textLength="6.36" lengthAdjust="spacingAndGlyphs" stroke="#22396a" stroke-width="0.15">2</text>
<line x1="350.0" y1="529.5" x2="355.5" y2="529.5" stroke="#2b4b85" stroke-width="1.4"/>
<text x="345.0" y="533.8" font-size="12.3" fill="#22396a" text-anchor="end" textLength="6.36" lengthAdjust="spacingAndGlyphs" stroke="#22396a" stroke-width="0.15">1</text>
<line x1="350.0" y1="652.3" x2="355.5" y2="652.3" stroke="#2b4b85" stroke-width="1.4"/>
<text x="345.0" y="656.5999999999999" font-size="12.3" fill="#22396a" text-anchor="end" textLength="6.36" lengthAdjust="spacingAndGlyphs" stroke="#22396a" stroke-width="0.15">0</text>
<line x1="375.6" y1="652.3" x2="375.6" y2="655.3" stroke="#2b4b85" stroke-width="1.2"/>
<line x1="418.54" y1="652.3" x2="418.54" y2="655.3" stroke="#2b4b85" stroke-width="1.2"/>
<line x1="461.48" y1="652.3" x2="461.48" y2="655.3" stroke="#2b4b85" stroke-width="1.2"/>
<line x1="504.42" y1="652.3" x2="504.42" y2="655.3" stroke="#2b4b85" stroke-width="1.2"/>
<line x1="547.36" y1="652.3" x2="547.36" y2="655.3" stroke="#2b4b85" stroke-width="1.2"/>
<line x1="590.3" y1="652.3" x2="590.3" y2="655.3" stroke="#2b4b85" stroke-width="1.2"/>
<line x1="633.24" y1="652.3" x2="633.24" y2="655.3" stroke="#2b4b85" stroke-width="1.2"/>
<line x1="676.1800000000001" y1="652.3" x2="676.1800000000001" y2="655.3" stroke="#2b4b85" stroke-width="1.2"/>
<line x1="719.12" y1="652.3" x2="719.12" y2="655.3" stroke="#2b4b85" stroke-width="1.2"/>
<line x1="762.06" y1="652.3" x2="762.06" y2="655.3" stroke="#2b4b85" stroke-width="1.2"/>
<line x1="805.0" y1="652.3" x2="805.0" y2="655.3" stroke="#2b4b85" stroke-width="1.2"/>
<line x1="375.6" y1="652.3" x2="375.6" y2="657.8" stroke="#2b4b85" stroke-width="1.4"/>
<text x="375.6" y="672.1999999999999" font-size="12.3" fill="#22396a" text-anchor="middle" textLength="38.17" lengthAdjust="spacingAndGlyphs" stroke="#22396a" stroke-width="0.15">0:00:00</text>
<line x1="590.3" y1="652.3" x2="590.3" y2="657.8" stroke="#2b4b85" stroke-width="1.4"/>
<text x="590.3" y="672.1999999999999" font-size="12.3" fill="#22396a" text-anchor="middle" textLength="38.17" lengthAdjust="spacingAndGlyphs" stroke="#22396a" stroke-width="0.15">0:01:00</text>
<line x1="806.4" y1="652.3" x2="806.4" y2="657.8" stroke="#2b4b85" stroke-width="1.4"/>
<text x="791.42" y="672.1999999999999" font-size="12.3" fill="#22396a" text-anchor="middle" textLength="38.17" lengthAdjust="spacingAndGlyphs" stroke="#22396a" stroke-width="0.15">0:02:00</text>
<line x1="355.5" y1="382" x2="355.5" y2="653.0" stroke="#2b4b85" stroke-width="1.4"/>
<line x1="352.7" y1="382.5" x2="355.5" y2="382.5" stroke="#2b4b85" stroke-width="1.3"/>
<line x1="350.0" y1="652.3" x2="816" y2="652.3" stroke="#2b4b85" stroke-width="1.4"/>
<g clip-path="url(#c1)"><path d="M382.8 651.7 L389.9 651.7 L397.1 651.7 L404.2 651.7 L411.4 651.7 L418.5 651.7 L425.7 651.7 L432.9 651.7 L440.0 651.7 L447.2 651.7 L454.3 651.7 L461.5 651.7 L468.6 651.7 L475.8 651.7 L483.0 651.7 L490.1 651.7 L497.3 651.7 L504.4 651.7 L511.6 651.7 L518.7 651.7 L525.9 651.7 L533.0 651.7 L540.2 651.7 L547.4 651.7 L554.5 651.7 L561.7 651.7 L568.8 651.7 L576.0 651.7 L583.1 651.7 L590.3 651.7 L597.5 651.7 L604.6 651.7 L611.8 651.7 L618.9 651.7 L626.1 651.7 L633.2 651.7 L640.4 651.7 L647.6 651.7 L654.7 651.7 L661.9 651.7 L669.0 651.7 L676.2 651.7 L683.3 651.7 L690.5 651.7 L697.6 651.7 L704.8 651.7 L712.0 651.7 L719.1 651.7 L726.3 651.7 L733.4 651.7 L740.6 651.7 L747.7 651.7 L754.9 651.7 L762.1 651.7 L769.2 651.7 L776.4 651.7" fill="none" stroke="#a678e8" stroke-width="1.2" stroke-linejoin="round"/></g>
<g clip-path="url(#c1)"><path d="M382.8 651.7 L747.7 651.7 L783.5 407.3" fill="none" stroke="#e0a030" stroke-width="1.3" stroke-linejoin="round"/></g>
<g clip-path="url(#c1)"><circle cx="382.8" cy="651.7" r="2.6" fill="#a678e8"/><circle cx="389.9" cy="651.7" r="2.6" fill="#a678e8"/><circle cx="397.1" cy="651.7" r="2.6" fill="#a678e8"/><circle cx="404.2" cy="651.7" r="2.6" fill="#a678e8"/><circle cx="411.4" cy="651.7" r="2.6" fill="#a678e8"/><circle cx="418.5" cy="651.7" r="2.6" fill="#a678e8"/><circle cx="425.7" cy="651.7" r="2.6" fill="#a678e8"/><circle cx="432.9" cy="651.7" r="2.6" fill="#a678e8"/><circle cx="440.0" cy="651.7" r="2.6" fill="#a678e8"/><circle cx="447.2" cy="651.7" r="2.6" fill="#a678e8"/><circle cx="454.3" cy="651.7" r="2.6" fill="#a678e8"/><circle cx="461.5" cy="651.7" r="2.6" fill="#a678e8"/><circle cx="468.6" cy="651.7" r="2.6" fill="#a678e8"/><circle cx="475.8" cy="651.7" r="2.6" fill="#a678e8"/><circle cx="483.0" cy="651.7" r="2.6" fill="#a678e8"/><circle cx="490.1" cy="651.7" r="2.6" fill="#a678e8"/><circle cx="497.3" cy="651.7" r="2.6" fill="#a678e8"/><circle cx="504.4" cy="651.7" r="2.6" fill="#a678e8"/><circle cx="511.6" cy="651.7" r="2.6" fill="#a678e8"/><circle cx="518.7" cy="651.7" r="2.6" fill="#a678e8"/><circle cx="525.9" cy="651.7" r="2.6" fill="#a678e8"/><circle cx="533.0" cy="651.7" r="2.6" fill="#a678e8"/><circle cx="540.2" cy="651.7" r="2.6" fill="#a678e8"/><circle cx="547.4" cy="651.7" r="2.6" fill="#a678e8"/><circle cx="554.5" cy="651.7" r="2.6" fill="#a678e8"/><circle cx="561.7" cy="651.7" r="2.6" fill="#a678e8"/><circle cx="568.8" cy="651.7" r="2.6" fill="#a678e8"/><circle cx="576.0" cy="651.7" r="2.6" fill="#a678e8"/><circle cx="583.1" cy="651.7" r="2.6" fill="#a678e8"/><circle cx="590.3" cy="651.7" r="2.6" fill="#a678e8"/><circle cx="597.5" cy="651.7" r="2.6" fill="#a678e8"/><circle cx="604.6" cy="651.7" r="2.6" fill="#a678e8"/><circle cx="611.8" cy="651.7" r="2.6" fill="#a678e8"/><circle cx="618.9" cy="651.7" r="2.6" fill="#a678e8"/><circle cx="626.1" cy="651.7" r="2.6" fill="#a678e8"/><circle cx="633.2" cy="651.7" r="2.6" fill="#a678e8"/><circle cx="640.4" cy="651.7" r="2.6" fill="#a678e8"/><circle cx="647.6" cy="651.7" r="2.6" fill="#a678e8"/><circle cx="654.7" cy="651.7" r="2.6" fill="#a678e8"/><circle cx="661.9" cy="651.7" r="2.6" fill="#a678e8"/><circle cx="669.0" cy="651.7" r="2.6" fill="#a678e8"/><circle cx="676.2" cy="651.7" r="2.6" fill="#a678e8"/><circle cx="683.3" cy="651.7" r="2.6" fill="#a678e8"/><circle cx="690.5" cy="651.7" r="2.6" fill="#a678e8"/><circle cx="697.6" cy="651.7" r="2.6" fill="#a678e8"/><circle cx="704.8" cy="651.7" r="2.6" fill="#a678e8"/><circle cx="712.0" cy="651.7" r="2.6" fill="#a678e8"/><circle cx="719.1" cy="651.7" r="2.6" fill="#a678e8"/><circle cx="726.3" cy="651.7" r="2.6" fill="#a678e8"/><circle cx="733.4" cy="651.7" r="2.6" fill="#a678e8"/><circle cx="740.6" cy="651.7" r="2.6" fill="#a678e8"/><circle cx="747.7" cy="651.7" r="2.6" fill="#a678e8"/><circle cx="754.9" cy="651.7" r="2.6" fill="#a678e8"/><circle cx="762.1" cy="651.7" r="2.6" fill="#a678e8"/><circle cx="769.2" cy="651.7" r="2.6" fill="#a678e8"/><circle cx="776.4" cy="651.7" r="2.6" fill="#a678e8"/></g>
<circle cx="783.5" cy="407.3" r="2.6" fill="#d4922a"/>
<g clip-path="url(#c1)"><path d="M382.8 407.3 L389.9 407.3 L397.1 407.3 L404.2 407.3 L411.4 407.3 L418.5 407.3 L425.7 407.3 L432.9 407.3 L440.0 407.3 L447.2 407.3 L454.3 407.3 L461.5 407.3 L468.6 407.3 L475.8 407.3 L483.0 407.3 L490.1 407.3 L497.3 407.3 L504.4 407.3 L511.6 407.3 L518.7 407.3 L525.9 407.3 L533.0 407.3 L540.2 407.3 L547.4 407.3 L554.5 407.3 L561.7 407.3 L568.8 407.3 L576.0 407.3 L583.1 407.3 L590.3 407.3 L597.5 407.3 L604.6 407.3 L611.8 407.3 L618.9 407.3 L626.1 407.3 L633.2 407.3 L640.4 407.3 L647.6 407.3 L654.7 407.3 L661.9 407.3 L669.0 407.3 L676.2 407.3 L683.3 407.3 L690.5 407.3 L697.6 407.3 L704.8 407.3 L712.0 407.3 L719.1 407.3 L726.3 407.3 L733.4 407.3 L740.6 407.3 L747.7 407.3 L754.9 529.5 L762.1 529.5 L769.2 529.5 L776.4 529.5 L783.5 651.7" fill="none" stroke="#5a9e85" stroke-width="1.2" stroke-linejoin="round"/><circle cx="382.8" cy="407.3" r="2.6" fill="#5a9e85"/><circle cx="389.9" cy="407.3" r="2.6" fill="#5a9e85"/><circle cx="397.1" cy="407.3" r="2.6" fill="#5a9e85"/><circle cx="404.2" cy="407.3" r="2.6" fill="#5a9e85"/><circle cx="411.4" cy="407.3" r="2.6" fill="#5a9e85"/><circle cx="418.5" cy="407.3" r="2.6" fill="#5a9e85"/><circle cx="425.7" cy="407.3" r="2.6" fill="#5a9e85"/><circle cx="432.9" cy="407.3" r="2.6" fill="#5a9e85"/><circle cx="440.0" cy="407.3" r="2.6" fill="#5a9e85"/><circle cx="447.2" cy="407.3" r="2.6" fill="#5a9e85"/><circle cx="454.3" cy="407.3" r="2.6" fill="#5a9e85"/><circle cx="461.5" cy="407.3" r="2.6" fill="#5a9e85"/><circle cx="468.6" cy="407.3" r="2.6" fill="#5a9e85"/><circle cx="475.8" cy="407.3" r="2.6" fill="#5a9e85"/><circle cx="483.0" cy="407.3" r="2.6" fill="#5a9e85"/><circle cx="490.1" cy="407.3" r="2.6" fill="#5a9e85"/><circle cx="497.3" cy="407.3" r="2.6" fill="#5a9e85"/><circle cx="504.4" cy="407.3" r="2.6" fill="#5a9e85"/><circle cx="511.6" cy="407.3" r="2.6" fill="#5a9e85"/><circle cx="518.7" cy="407.3" r="2.6" fill="#5a9e85"/><circle cx="525.9" cy="407.3" r="2.6" fill="#5a9e85"/><circle cx="533.0" cy="407.3" r="2.6" fill="#5a9e85"/><circle cx="540.2" cy="407.3" r="2.6" fill="#5a9e85"/><circle cx="547.4" cy="407.3" r="2.6" fill="#5a9e85"/><circle cx="554.5" cy="407.3" r="2.6" fill="#5a9e85"/><circle cx="561.7" cy="407.3" r="2.6" fill="#5a9e85"/><circle cx="568.8" cy="407.3" r="2.6" fill="#5a9e85"/><circle cx="576.0" cy="407.3" r="2.6" fill="#5a9e85"/><circle cx="583.1" cy="407.3" r="2.6" fill="#5a9e85"/><circle cx="590.3" cy="407.3" r="2.6" fill="#5a9e85"/><circle cx="597.5" cy="407.3" r="2.6" fill="#5a9e85"/><circle cx="604.6" cy="407.3" r="2.6" fill="#5a9e85"/><circle cx="611.8" cy="407.3" r="2.6" fill="#5a9e85"/><circle cx="618.9" cy="407.3" r="2.6" fill="#5a9e85"/><circle cx="626.1" cy="407.3" r="2.6" fill="#5a9e85"/><circle cx="633.2" cy="407.3" r="2.6" fill="#5a9e85"/><circle cx="640.4" cy="407.3" r="2.6" fill="#5a9e85"/><circle cx="647.6" cy="407.3" r="2.6" fill="#5a9e85"/><circle cx="654.7" cy="407.3" r="2.6" fill="#5a9e85"/><circle cx="661.9" cy="407.3" r="2.6" fill="#5a9e85"/><circle cx="669.0" cy="407.3" r="2.6" fill="#5a9e85"/><circle cx="676.2" cy="407.3" r="2.6" fill="#5a9e85"/><circle cx="683.3" cy="407.3" r="2.6" fill="#5a9e85"/><circle cx="690.5" cy="407.3" r="2.6" fill="#5a9e85"/><circle cx="697.6" cy="407.3" r="2.6" fill="#5a9e85"/><circle cx="704.8" cy="407.3" r="2.6" fill="#5a9e85"/><circle cx="712.0" cy="407.3" r="2.6" fill="#5a9e85"/><circle cx="719.1" cy="407.3" r="2.6" fill="#5a9e85"/><circle cx="726.3" cy="407.3" r="2.6" fill="#5a9e85"/><circle cx="733.4" cy="407.3" r="2.6" fill="#5a9e85"/><circle cx="740.6" cy="407.3" r="2.6" fill="#5a9e85"/><circle cx="747.7" cy="407.3" r="2.6" fill="#5a9e85"/><circle cx="754.9" cy="529.5" r="2.6" fill="#5a9e85"/><circle cx="762.1" cy="529.5" r="2.6" fill="#5a9e85"/><circle cx="769.2" cy="529.5" r="2.6" fill="#5a9e85"/><circle cx="776.4" cy="529.5" r="2.6" fill="#5a9e85"/><circle cx="783.5" cy="651.7" r="2.6" fill="#5a9e85"/></g>
<line x1="355.5" y1="382" x2="355.5" y2="653.3000000000001" stroke="#2b4b85" stroke-width="1.4"/>
<line x1="350.0" y1="652.6" x2="816" y2="652.6" stroke="#2b4b85" stroke-width="1.4"/>
<rect x="347.2" y="686.0" width="13" height="13" fill="#a0508a" stroke="#0877ea" stroke-width="2"/>
<path d="M350.2 692.3 L352.8 695.2 L357.2 689.3" fill="none" stroke="#fff" stroke-width="1.7"/>
<text x="370.6" y="695.9" font-size="13" fill="#000" textLength="27.8" lengthAdjust="spacingAndGlyphs" stroke="#000" stroke-width="0.25">Error</text>
<rect x="411.1" y="686.0" width="13" height="13" fill="#d08a20" stroke="#0877ea" stroke-width="2"/>
<path d="M414.1 692.3 L416.70000000000005 695.2 L421.1 689.3" fill="none" stroke="#fff" stroke-width="1.7"/>
<text x="434.7" y="695.9" font-size="13" fill="#000" textLength="47.2" lengthAdjust="spacingAndGlyphs" stroke="#000" stroke-width="0.25">Finished</text>
<rect x="494.9" y="686.0" width="13" height="13" fill="#b080f0" stroke="#0877ea" stroke-width="2"/>
<path d="M497.9 692.3 L500.5 695.2 L504.9 689.3" fill="none" stroke="#fff" stroke-width="1.7"/>
<text x="518.3" y="695.9" font-size="13" fill="#000" textLength="35.4" lengthAdjust="spacingAndGlyphs" stroke="#000" stroke-width="0.25">Ready</text>
<rect x="566" y="686.0" width="13" height="13" fill="#5a9e85" stroke="#0877ea" stroke-width="2"/>
<path d="M569 692.3 L571.6 695.2 L576 689.3" fill="none" stroke="#fff" stroke-width="1.7"/>
<text x="589.2" y="695.9" font-size="13" fill="#000" textLength="48.8" lengthAdjust="spacingAndGlyphs" stroke="#000" stroke-width="0.25">Running</text>
<rect x="840" y="329" width="492.75" height="393.5" fill="#e6e6e6"/>
<rect x="839" y="328" width="490" height="391" fill="#c9c9c9"/>
<rect x="839" y="328" width="488" height="389" fill="#ffffff"/>
<text x="852.8" y="352.7" font-size="13" fill="#000" font-weight="bold" textLength="248.74" lengthAdjust="spacingAndGlyphs">Trans Response Time - Whole Load Test</text>
<line x1="1252" y1="344" x2="1265.7" y2="344" stroke="#5a5a5a" stroke-width="2"/>
<line x1="1252" y1="349" x2="1265.7" y2="349" stroke="#5a5a5a" stroke-width="2"/>
<line x1="1252" y1="353.7" x2="1265.7" y2="353.7" stroke="#5a5a5a" stroke-width="2"/>
<path d="M1275 348.2 V343.2 H1280 M1282 343.2 H1287 V348.2 M1287 350.2 V355.2 H1282 M1280 355.2 H1275 V350.2" fill="none" stroke="#5a5a5a" stroke-width="2"/>
<path d="M1296.9 342.7 L1309.1000000000001 354.9 M1309.1000000000001 342.7 L1296.9 354.9" fill="none" stroke="#5a5a5a" stroke-width="2"/>
<clipPath id="c2"><rect x="868.3" y="382" width="453" height="255"/></clipPath>
<line x1="868.3" y1="382.8" x2="1321" y2="382.8" stroke="#cdd6e4" stroke-width="1"/>
<line x1="1320.5" y1="382.3" x2="1320.5" y2="637" stroke="#cdd6e4" stroke-width="1"/>
<line x1="868.3" y1="391" x2="1321" y2="391" stroke="#cdd6e4" stroke-width="1"/>
<line x1="868.3" y1="473.3" x2="1321" y2="473.3" stroke="#cdd6e4" stroke-width="1"/>
<line x1="868.3" y1="555.3" x2="1321" y2="555.3" stroke="#cdd6e4" stroke-width="1"/>
<line x1="868.3" y1="637" x2="1321" y2="637" stroke="#cdd6e4" stroke-width="1"/>
<line x1="865.5" y1="391.0" x2="868.3" y2="391.0" stroke="#2b4b85" stroke-width="1.2"/>
<line x1="865.5" y1="407.4" x2="868.3" y2="407.4" stroke="#2b4b85" stroke-width="1.2"/>
<line x1="865.5" y1="423.8" x2="868.3" y2="423.8" stroke="#2b4b85" stroke-width="1.2"/>
<line x1="865.5" y1="440.2" x2="868.3" y2="440.2" stroke="#2b4b85" stroke-width="1.2"/>
<line x1="865.5" y1="456.6" x2="868.3" y2="456.6" stroke="#2b4b85" stroke-width="1.2"/>
<line x1="865.5" y1="473.0" x2="868.3" y2="473.0" stroke="#2b4b85" stroke-width="1.2"/>
<line x1="865.5" y1="489.4" x2="868.3" y2="489.4" stroke="#2b4b85" stroke-width="1.2"/>
<line x1="865.5" y1="505.79999999999995" x2="868.3" y2="505.79999999999995" stroke="#2b4b85" stroke-width="1.2"/>
<line x1="865.5" y1="522.2" x2="868.3" y2="522.2" stroke="#2b4b85" stroke-width="1.2"/>
<line x1="865.5" y1="538.6" x2="868.3" y2="538.6" stroke="#2b4b85" stroke-width="1.2"/>
<line x1="865.5" y1="555.0" x2="868.3" y2="555.0" stroke="#2b4b85" stroke-width="1.2"/>
<line x1="865.5" y1="571.4" x2="868.3" y2="571.4" stroke="#2b4b85" stroke-width="1.2"/>
<line x1="865.5" y1="587.8" x2="868.3" y2="587.8" stroke="#2b4b85" stroke-width="1.2"/>
<line x1="865.5" y1="604.2" x2="868.3" y2="604.2" stroke="#2b4b85" stroke-width="1.2"/>
<line x1="865.5" y1="620.5999999999999" x2="868.3" y2="620.5999999999999" stroke="#2b4b85" stroke-width="1.2"/>
<line x1="865.5" y1="637.0" x2="868.3" y2="637.0" stroke="#2b4b85" stroke-width="1.2"/>
<line x1="862.8" y1="391" x2="868.3" y2="391" stroke="#2b4b85" stroke-width="1.4"/>
<text x="857.8" y="395.3" font-size="12.3" fill="#22396a" text-anchor="end" textLength="12.72" lengthAdjust="spacingAndGlyphs" stroke="#22396a" stroke-width="0.15">30</text>
<line x1="862.8" y1="473.3" x2="868.3" y2="473.3" stroke="#2b4b85" stroke-width="1.4"/>
<text x="857.8" y="477.6" font-size="12.3" fill="#22396a" text-anchor="end" textLength="12.72" lengthAdjust="spacingAndGlyphs" stroke="#22396a" stroke-width="0.15">20</text>
<line x1="862.8" y1="555.3" x2="868.3" y2="555.3" stroke="#2b4b85" stroke-width="1.4"/>
<text x="857.8" y="559.5999999999999" font-size="12.3" fill="#22396a" text-anchor="end" textLength="12.72" lengthAdjust="spacingAndGlyphs" stroke="#22396a" stroke-width="0.15">10</text>
<line x1="862.8" y1="637" x2="868.3" y2="637" stroke="#2b4b85" stroke-width="1.4"/>
<text x="857.8" y="641.3" font-size="12.3" fill="#22396a" text-anchor="end" textLength="6.36" lengthAdjust="spacingAndGlyphs" stroke="#22396a" stroke-width="0.15">0</text>
<line x1="895.7" y1="637" x2="895.7" y2="640" stroke="#2b4b85" stroke-width="1.2"/>
<line x1="937.36" y1="637" x2="937.36" y2="640" stroke="#2b4b85" stroke-width="1.2"/>
<line x1="979.02" y1="637" x2="979.02" y2="640" stroke="#2b4b85" stroke-width="1.2"/>
<line x1="1020.6800000000001" y1="637" x2="1020.6800000000001" y2="640" stroke="#2b4b85" stroke-width="1.2"/>
<line x1="1062.3400000000001" y1="637" x2="1062.3400000000001" y2="640" stroke="#2b4b85" stroke-width="1.2"/>
<line x1="1104.0" y1="637" x2="1104.0" y2="640" stroke="#2b4b85" stroke-width="1.2"/>
<line x1="1145.66" y1="637" x2="1145.66" y2="640" stroke="#2b4b85" stroke-width="1.2"/>
<line x1="1187.3200000000002" y1="637" x2="1187.3200000000002" y2="640" stroke="#2b4b85" stroke-width="1.2"/>
<line x1="1228.98" y1="637" x2="1228.98" y2="640" stroke="#2b4b85" stroke-width="1.2"/>
<line x1="1270.6399999999999" y1="637" x2="1270.6399999999999" y2="640" stroke="#2b4b85" stroke-width="1.2"/>
<line x1="1312.3" y1="637" x2="1312.3" y2="640" stroke="#2b4b85" stroke-width="1.2"/>
<line x1="895.7" y1="637" x2="895.7" y2="642.5" stroke="#2b4b85" stroke-width="1.4"/>
<text x="895.7" y="656.9" font-size="12.3" fill="#22396a" text-anchor="middle" textLength="38.17" lengthAdjust="spacingAndGlyphs" stroke="#22396a" stroke-width="0.15">0:00:00</text>
<line x1="1103.7" y1="637" x2="1103.7" y2="642.5" stroke="#2b4b85" stroke-width="1.4"/>
<text x="1103.7" y="656.9" font-size="12.3" fill="#22396a" text-anchor="middle" textLength="38.17" lengthAdjust="spacingAndGlyphs" stroke="#22396a" stroke-width="0.15">0:01:00</text>
<line x1="1312.3" y1="637" x2="1312.3" y2="642.5" stroke="#2b4b85" stroke-width="1.4"/>
<text x="1296.42" y="656.9" font-size="12.3" fill="#22396a" text-anchor="middle" textLength="38.17" lengthAdjust="spacingAndGlyphs" stroke="#22396a" stroke-width="0.15">0:02:00</text>
<line x1="868.3" y1="382.3" x2="868.3" y2="637.7" stroke="#2b4b85" stroke-width="1.4"/>
<line x1="865.5" y1="382.8" x2="868.3" y2="382.8" stroke="#2b4b85" stroke-width="1.3"/>
<line x1="862.8" y1="637" x2="1321" y2="637" stroke="#2b4b85" stroke-width="1.4"/>
<g><path d="M964.3 481.3 L999.3 405.3 L1048.3 413.3 L1082.3 415.3 L1103.3 509.3 L1173.3 461.3 L1242.3 484.3 L1256.3 437.3 L1291.3 512.3" fill="none" stroke="#4444cc" stroke-width="1.2" stroke-linejoin="round"/><circle cx="964.3" cy="481.3" r="2.6" fill="#4444cc"/><circle cx="999.3" cy="405.3" r="2.6" fill="#4444cc"/><circle cx="1048.3" cy="413.3" r="2.6" fill="#4444cc"/><circle cx="1082.3" cy="415.3" r="2.6" fill="#4444cc"/><circle cx="1103.3" cy="509.3" r="2.6" fill="#4444cc"/><circle cx="1173.3" cy="461.3" r="2.6" fill="#4444cc"/><circle cx="1242.3" cy="484.3" r="2.6" fill="#4444cc"/><circle cx="1256.3" cy="437.3" r="2.6" fill="#4444cc"/><circle cx="1291.3" cy="512.3" r="2.6" fill="#4444cc"/></g>
<g clip-path="url(#c2)"><circle cx="895.7" cy="637" r="2.6" fill="#38cdbd"/><circle cx="1256.3" cy="637" r="2.6" fill="#b8ad98"/><circle cx="1291.3" cy="637" r="2.6" fill="#b8ad98"/></g>
<line x1="868.3" y1="382.3" x2="868.3" y2="637.7" stroke="#2b4b85" stroke-width="1.4"/>
<line x1="862.8" y1="637" x2="1321" y2="637" stroke="#2b4b85" stroke-width="1.4"/>
<rect x="853" y="670.9000000000001" width="13" height="13" fill="#38cdbd" stroke="#0877ea" stroke-width="2"/>
<path d="M856 677.2 L858.6 680.1000000000001 L863 674.2" fill="none" stroke="#fff" stroke-width="1.7"/>
<text x="876" y="680.8" font-size="13" fill="#000" textLength="128" lengthAdjust="spacingAndGlyphs" stroke="#000" stroke-width="0.25">vuser_init_Transaction</text>
<rect x="1017" y="670.9000000000001" width="13" height="13" fill="#4040d0" stroke="#0877ea" stroke-width="2"/>
<path d="M1020 677.2 L1022.6 680.1000000000001 L1027 674.2" fill="none" stroke="#fff" stroke-width="1.7"/>
<text x="1040" y="680.8" font-size="13" fill="#000" textLength="110" lengthAdjust="spacingAndGlyphs" stroke="#000" stroke-width="0.25">Action_Transaction</text>
<rect x="1163.3" y="670.9000000000001" width="13" height="13" fill="#b8ad98" stroke="#0877ea" stroke-width="2"/>
<path d="M1166.3 677.2 L1168.8999999999999 680.1000000000001 L1173.3 674.2" fill="none" stroke="#fff" stroke-width="1.7"/>
<clipPath id="c2l"><rect x="1150" y="660" width="166" height="30"/></clipPath>
<g clip-path="url(#c2l)">
<text x="1186" y="680.8" font-size="13" fill="#000" textLength="131" lengthAdjust="spacingAndGlyphs" stroke="#000" stroke-width="0.25">vuser_end_Transaction</text>
</g>
<rect x="846" y="691" width="470" height="15" fill="#f0f0f0"/>
<rect x="862.7" y="691" width="291.3" height="15" fill="#c8c8c8"/>
<path d="M856 695.5 L853 698.5 L856 701.5" fill="none" stroke="#a0a0a0" stroke-width="1"/>
<path d="M1306 695.5 L1309 698.5 L1306 701.5" fill="none" stroke="#a0a0a0" stroke-width="1"/>
<rect x="1346" y="329" width="492.75" height="393.5" fill="#e6e6e6"/>
<rect x="1345" y="328" width="490" height="391" fill="#c9c9c9"/>
<rect x="1345" y="328" width="488" height="389" fill="#ffffff"/>
<text x="1358.8" y="352.7" font-size="13" fill="#000" font-weight="bold" textLength="213.56" lengthAdjust="spacingAndGlyphs">Hits per Second - Whole Load Test</text>
<line x1="1758" y1="344" x2="1771.7" y2="344" stroke="#5a5a5a" stroke-width="2"/>
<line x1="1758" y1="349" x2="1771.7" y2="349" stroke="#5a5a5a" stroke-width="2"/>
<line x1="1758" y1="353.7" x2="1771.7" y2="353.7" stroke="#5a5a5a" stroke-width="2"/>
<path d="M1781 348.2 V343.2 H1786 M1788 343.2 H1793 V348.2 M1793 350.2 V355.2 H1788 M1786 355.2 H1781 V350.2" fill="none" stroke="#5a5a5a" stroke-width="2"/>
<path d="M1802.9 342.7 L1815.1000000000001 354.9 M1815.1000000000001 342.7 L1802.9 354.9" fill="none" stroke="#5a5a5a" stroke-width="2"/>
<line x1="1377" y1="382.5" x2="1827.3" y2="382.5" stroke="#cdd6e4" stroke-width="1"/>
<line x1="1826.8" y1="382" x2="1826.8" y2="652" stroke="#cdd6e4" stroke-width="1"/>
<line x1="1377" y1="407.2" x2="1827.3" y2="407.2" stroke="#cdd6e4" stroke-width="1"/>
<line x1="1377" y1="529.3" x2="1827.3" y2="529.3" stroke="#cdd6e4" stroke-width="1"/>
<line x1="1377" y1="652" x2="1827.3" y2="652" stroke="#cdd6e4" stroke-width="1"/>
<line x1="1374.2" y1="382.78" x2="1377" y2="382.78" stroke="#2b4b85" stroke-width="1.2"/>
<line x1="1374.2" y1="407.2" x2="1377" y2="407.2" stroke="#2b4b85" stroke-width="1.2"/>
<line x1="1374.2" y1="431.62" x2="1377" y2="431.62" stroke="#2b4b85" stroke-width="1.2"/>
<line x1="1374.2" y1="456.03999999999996" x2="1377" y2="456.03999999999996" stroke="#2b4b85" stroke-width="1.2"/>
<line x1="1374.2" y1="480.46" x2="1377" y2="480.46" stroke="#2b4b85" stroke-width="1.2"/>
<line x1="1374.2" y1="504.88" x2="1377" y2="504.88" stroke="#2b4b85" stroke-width="1.2"/>
<line x1="1374.2" y1="529.3" x2="1377" y2="529.3" stroke="#2b4b85" stroke-width="1.2"/>
<line x1="1374.2" y1="553.72" x2="1377" y2="553.72" stroke="#2b4b85" stroke-width="1.2"/>
<line x1="1374.2" y1="578.14" x2="1377" y2="578.14" stroke="#2b4b85" stroke-width="1.2"/>
<line x1="1374.2" y1="602.56" x2="1377" y2="602.56" stroke="#2b4b85" stroke-width="1.2"/>
<line x1="1374.2" y1="626.98" x2="1377" y2="626.98" stroke="#2b4b85" stroke-width="1.2"/>
<line x1="1374.2" y1="651.4" x2="1377" y2="651.4" stroke="#2b4b85" stroke-width="1.2"/>
<line x1="1371.5" y1="407.2" x2="1377" y2="407.2" stroke="#2b4b85" stroke-width="1.4"/>
<text x="1366.5" y="411.5" font-size="12.3" fill="#22396a" text-anchor="end" textLength="15.9" lengthAdjust="spacingAndGlyphs" stroke="#22396a" stroke-width="0.15">0.4</text>
<line x1="1371.5" y1="529.3" x2="1377" y2="529.3" stroke="#2b4b85" stroke-width="1.4"/>
<text x="1366.5" y="533.5999999999999" font-size="12.3" fill="#22396a" text-anchor="end" textLength="15.9" lengthAdjust="spacingAndGlyphs" stroke="#22396a" stroke-width="0.15">0.2</text>
<line x1="1371.5" y1="652" x2="1377" y2="652" stroke="#2b4b85" stroke-width="1.4"/>
<text x="1366.5" y="656.3" font-size="12.3" fill="#22396a" text-anchor="end" textLength="6.36" lengthAdjust="spacingAndGlyphs" stroke="#22396a" stroke-width="0.15">0</text>
<line x1="1412.42" y1="652" x2="1412.42" y2="655" stroke="#2b4b85" stroke-width="1.2"/>
<line x1="1457.64" y1="652" x2="1457.64" y2="655" stroke="#2b4b85" stroke-width="1.2"/>
<line x1="1502.8600000000001" y1="652" x2="1502.8600000000001" y2="655" stroke="#2b4b85" stroke-width="1.2"/>
<line x1="1548.08" y1="652" x2="1548.08" y2="655" stroke="#2b4b85" stroke-width="1.2"/>
<line x1="1593.3" y1="652" x2="1593.3" y2="655" stroke="#2b4b85" stroke-width="1.2"/>
<line x1="1638.52" y1="652" x2="1638.52" y2="655" stroke="#2b4b85" stroke-width="1.2"/>
<line x1="1683.74" y1="652" x2="1683.74" y2="655" stroke="#2b4b85" stroke-width="1.2"/>
<line x1="1728.96" y1="652" x2="1728.96" y2="655" stroke="#2b4b85" stroke-width="1.2"/>
<line x1="1774.18" y1="652" x2="1774.18" y2="655" stroke="#2b4b85" stroke-width="1.2"/>
<line x1="1819.4" y1="652" x2="1819.4" y2="655" stroke="#2b4b85" stroke-width="1.2"/>
<line x1="1593.3" y1="652" x2="1593.3" y2="657.5" stroke="#2b4b85" stroke-width="1.4"/>
<text x="1593.3" y="671.9" font-size="12.3" fill="#22396a" text-anchor="middle" textLength="38.17" lengthAdjust="spacingAndGlyphs" stroke="#22396a" stroke-width="0.15">0:01:00</text>
<line x1="1819.4" y1="652" x2="1819.4" y2="657.5" stroke="#2b4b85" stroke-width="1.4"/>
<text x="1802.72" y="671.9" font-size="12.3" fill="#22396a" text-anchor="middle" textLength="38.17" lengthAdjust="spacingAndGlyphs" stroke="#22396a" stroke-width="0.15">0:02:00</text>
<line x1="1377" y1="382" x2="1377" y2="652.7" stroke="#2b4b85" stroke-width="1.4"/>
<line x1="1374.2" y1="382.5" x2="1377" y2="382.5" stroke="#2b4b85" stroke-width="1.3"/>
<line x1="1371.5" y1="652" x2="1827.3" y2="652" stroke="#2b4b85" stroke-width="1.4"/>
<g><path d="M1403.5 407.2 L1479.8 529.3 L1494.5 529.3 L1570.4 529.3 L1608.4 529.3 L1630.3 529.3 L1706.2 407.2 L1759.6 529.3" fill="none" stroke="#9a5e5e" stroke-width="1.2" stroke-linejoin="round"/><circle cx="1403.5" cy="407.2" r="2.6" fill="#9a5e5e"/><circle cx="1479.8" cy="529.3" r="2.6" fill="#9a5e5e"/><circle cx="1494.5" cy="529.3" r="2.6" fill="#9a5e5e"/><circle cx="1570.4" cy="529.3" r="2.6" fill="#9a5e5e"/><circle cx="1608.4" cy="529.3" r="2.6" fill="#9a5e5e"/><circle cx="1630.3" cy="529.3" r="2.6" fill="#9a5e5e"/><circle cx="1706.2" cy="407.2" r="2.6" fill="#9a5e5e"/><circle cx="1759.6" cy="529.3" r="2.6" fill="#9a5e5e"/></g>
<rect x="1359.7" y="685.5" width="13" height="13" fill="#9a6262" stroke="#0877ea" stroke-width="2"/>
<path d="M1362.7 691.8 L1365.3 694.7 L1369.7 688.8" fill="none" stroke="#fff" stroke-width="1.7"/>
<text x="1382.7" y="696.3" font-size="13" fill="#000" textLength="91.3" lengthAdjust="spacingAndGlyphs" stroke="#000" stroke-width="0.25">Hits Per Second</text>
<rect x="334" y="735" width="492.75" height="393.5" fill="#e6e6e6"/>
<rect x="333" y="734" width="490" height="391" fill="#c9c9c9"/>
<rect x="333" y="734" width="488" height="389" fill="#ffffff"/>
<text x="346.8" y="758.7" font-size="13" fill="#000" font-weight="bold" textLength="187.51" lengthAdjust="spacingAndGlyphs">Throughput - Whole Load Test</text>
<line x1="746" y1="750" x2="759.7" y2="750" stroke="#5a5a5a" stroke-width="2"/>
<line x1="746" y1="755" x2="759.7" y2="755" stroke="#5a5a5a" stroke-width="2"/>
<line x1="746" y1="759.7" x2="759.7" y2="759.7" stroke="#5a5a5a" stroke-width="2"/>
<path d="M769 754.2 V749.2 H774 M776 749.2 H781 V754.2 M781 756.2 V761.2 H776 M774 761.2 H769 V756.2" fill="none" stroke="#5a5a5a" stroke-width="2"/>
<path d="M790.9 748.7 L803.1 760.9000000000001 M803.1 748.7 L790.9 760.9000000000001" fill="none" stroke="#5a5a5a" stroke-width="2"/>
<line x1="381.5" y1="789.4" x2="815.4" y2="789.4" stroke="#cdd6e4" stroke-width="1"/>
<line x1="814.9" y1="788.9" x2="814.9" y2="1059.1" stroke="#cdd6e4" stroke-width="1"/>
<line x1="381.5" y1="799.1" x2="815.4" y2="799.1" stroke="#cdd6e4" stroke-width="1"/>
<line x1="381.5" y1="885.2" x2="815.4" y2="885.2" stroke="#cdd6e4" stroke-width="1"/>
<line x1="381.5" y1="972" x2="815.4" y2="972" stroke="#cdd6e4" stroke-width="1"/>
<line x1="381.5" y1="1059.1" x2="815.4" y2="1059.1" stroke="#cdd6e4" stroke-width="1"/>
<line x1="378.7" y1="799.1" x2="381.5" y2="799.1" stroke="#2b4b85" stroke-width="1.2"/>
<line x1="378.7" y1="816.4300000000001" x2="381.5" y2="816.4300000000001" stroke="#2b4b85" stroke-width="1.2"/>
<line x1="378.7" y1="833.76" x2="381.5" y2="833.76" stroke="#2b4b85" stroke-width="1.2"/>
<line x1="378.7" y1="851.09" x2="381.5" y2="851.09" stroke="#2b4b85" stroke-width="1.2"/>
<line x1="378.7" y1="868.4200000000001" x2="381.5" y2="868.4200000000001" stroke="#2b4b85" stroke-width="1.2"/>
<line x1="378.7" y1="885.75" x2="381.5" y2="885.75" stroke="#2b4b85" stroke-width="1.2"/>
<line x1="378.7" y1="903.08" x2="381.5" y2="903.08" stroke="#2b4b85" stroke-width="1.2"/>
<line x1="378.7" y1="920.41" x2="381.5" y2="920.41" stroke="#2b4b85" stroke-width="1.2"/>
<line x1="378.7" y1="937.74" x2="381.5" y2="937.74" stroke="#2b4b85" stroke-width="1.2"/>
<line x1="378.7" y1="955.0699999999999" x2="381.5" y2="955.0699999999999" stroke="#2b4b85" stroke-width="1.2"/>
<line x1="378.7" y1="972.4" x2="381.5" y2="972.4" stroke="#2b4b85" stroke-width="1.2"/>
<line x1="378.7" y1="989.73" x2="381.5" y2="989.73" stroke="#2b4b85" stroke-width="1.2"/>
<line x1="378.7" y1="1007.06" x2="381.5" y2="1007.06" stroke="#2b4b85" stroke-width="1.2"/>
<line x1="378.7" y1="1024.3899999999999" x2="381.5" y2="1024.3899999999999" stroke="#2b4b85" stroke-width="1.2"/>
<line x1="378.7" y1="1041.72" x2="381.5" y2="1041.72" stroke="#2b4b85" stroke-width="1.2"/>
<line x1="378.7" y1="1059.05" x2="381.5" y2="1059.05" stroke="#2b4b85" stroke-width="1.2"/>
<line x1="376.0" y1="799.1" x2="381.5" y2="799.1" stroke="#2b4b85" stroke-width="1.4"/>
<text x="371.0" y="803.4" font-size="12.3" fill="#22396a" text-anchor="end" textLength="31.81" lengthAdjust="spacingAndGlyphs" stroke="#22396a" stroke-width="0.15">30000</text>
<line x1="376.0" y1="885.2" x2="381.5" y2="885.2" stroke="#2b4b85" stroke-width="1.4"/>
<text x="371.0" y="889.5" font-size="12.3" fill="#22396a" text-anchor="end" textLength="31.81" lengthAdjust="spacingAndGlyphs" stroke="#22396a" stroke-width="0.15">20000</text>
<line x1="376.0" y1="972" x2="381.5" y2="972" stroke="#2b4b85" stroke-width="1.4"/>
<text x="371.0" y="976.3" font-size="12.3" fill="#22396a" text-anchor="end" textLength="31.81" lengthAdjust="spacingAndGlyphs" stroke="#22396a" stroke-width="0.15">10000</text>
<line x1="376.0" y1="1059.1" x2="381.5" y2="1059.1" stroke="#2b4b85" stroke-width="1.4"/>
<text x="371.0" y="1063.3999999999999" font-size="12.3" fill="#22396a" text-anchor="end" textLength="6.36" lengthAdjust="spacingAndGlyphs" stroke="#22396a" stroke-width="0.15">0</text>
<line x1="414.48" y1="1059.1" x2="414.48" y2="1062.1" stroke="#2b4b85" stroke-width="1.2"/>
<line x1="458.26" y1="1059.1" x2="458.26" y2="1062.1" stroke="#2b4b85" stroke-width="1.2"/>
<line x1="502.03999999999996" y1="1059.1" x2="502.03999999999996" y2="1062.1" stroke="#2b4b85" stroke-width="1.2"/>
<line x1="545.8199999999999" y1="1059.1" x2="545.8199999999999" y2="1062.1" stroke="#2b4b85" stroke-width="1.2"/>
<line x1="589.6" y1="1059.1" x2="589.6" y2="1062.1" stroke="#2b4b85" stroke-width="1.2"/>
<line x1="633.38" y1="1059.1" x2="633.38" y2="1062.1" stroke="#2b4b85" stroke-width="1.2"/>
<line x1="677.1600000000001" y1="1059.1" x2="677.1600000000001" y2="1062.1" stroke="#2b4b85" stroke-width="1.2"/>
<line x1="720.94" y1="1059.1" x2="720.94" y2="1062.1" stroke="#2b4b85" stroke-width="1.2"/>
<line x1="764.72" y1="1059.1" x2="764.72" y2="1062.1" stroke="#2b4b85" stroke-width="1.2"/>
<line x1="808.5" y1="1059.1" x2="808.5" y2="1062.1" stroke="#2b4b85" stroke-width="1.2"/>
<line x1="589.6" y1="1059.1" x2="589.6" y2="1064.6" stroke="#2b4b85" stroke-width="1.4"/>
<text x="589.6" y="1079.0" font-size="12.3" fill="#22396a" text-anchor="middle" textLength="38.17" lengthAdjust="spacingAndGlyphs" stroke="#22396a" stroke-width="0.15">0:01:00</text>
<line x1="808.5" y1="1059.1" x2="808.5" y2="1064.6" stroke="#2b4b85" stroke-width="1.4"/>
<text x="790.82" y="1079.0" font-size="12.3" fill="#22396a" text-anchor="middle" textLength="38.17" lengthAdjust="spacingAndGlyphs" stroke="#22396a" stroke-width="0.15">0:02:00</text>
<line x1="381.5" y1="788.9" x2="381.5" y2="1059.8" stroke="#2b4b85" stroke-width="1.4"/>
<line x1="378.7" y1="789.4" x2="381.5" y2="789.4" stroke="#2b4b85" stroke-width="1.3"/>
<line x1="376.0" y1="1059.1" x2="815.4" y2="1059.1" stroke="#2b4b85" stroke-width="1.4"/>
<g><path d="M407.5 838.4 L421.5 843.6 L443.7 949.5 L458.4 950.5 L479.2 985.3 L494.6 876.3 L516.4 911.5 L531.5 913.2 L552.3 969.3 L567.4 891.7 L589.6 929.3 L603.6 986.4 L625.4 865.4 L640.5 852.4 L662.3 982.3 L698.2 814.5 L713.2 836.4 L735.1 914.3 L749.4 837.4 L771.3 962.1" fill="none" stroke="#9a5e5e" stroke-width="1.2" stroke-linejoin="round"/><circle cx="407.5" cy="838.4" r="2.6" fill="#9a5e5e"/><circle cx="421.5" cy="843.6" r="2.6" fill="#9a5e5e"/><circle cx="443.7" cy="949.5" r="2.6" fill="#9a5e5e"/><circle cx="458.4" cy="950.5" r="2.6" fill="#9a5e5e"/><circle cx="479.2" cy="985.3" r="2.6" fill="#9a5e5e"/><circle cx="494.6" cy="876.3" r="2.6" fill="#9a5e5e"/><circle cx="516.4" cy="911.5" r="2.6" fill="#9a5e5e"/><circle cx="531.5" cy="913.2" r="2.6" fill="#9a5e5e"/><circle cx="552.3" cy="969.3" r="2.6" fill="#9a5e5e"/><circle cx="567.4" cy="891.7" r="2.6" fill="#9a5e5e"/><circle cx="589.6" cy="929.3" r="2.6" fill="#9a5e5e"/><circle cx="603.6" cy="986.4" r="2.6" fill="#9a5e5e"/><circle cx="625.4" cy="865.4" r="2.6" fill="#9a5e5e"/><circle cx="640.5" cy="852.4" r="2.6" fill="#9a5e5e"/><circle cx="662.3" cy="982.3" r="2.6" fill="#9a5e5e"/><circle cx="698.2" cy="814.5" r="2.6" fill="#9a5e5e"/><circle cx="713.2" cy="836.4" r="2.6" fill="#9a5e5e"/><circle cx="735.1" cy="914.3" r="2.6" fill="#9a5e5e"/><circle cx="749.4" cy="837.4" r="2.6" fill="#9a5e5e"/><circle cx="771.3" cy="962.1" r="2.6" fill="#9a5e5e"/></g>
<rect x="347.3" y="1092.9" width="13" height="13" fill="#9a6262" stroke="#0877ea" stroke-width="2"/>
<path d="M350.3 1099.2 L352.90000000000003 1102.1000000000001 L357.3 1096.2" fill="none" stroke="#fff" stroke-width="1.7"/>
<text x="370.2" y="1103.6" font-size="13" fill="#000" textLength="70" lengthAdjust="spacingAndGlyphs" stroke="#000" stroke-width="0.25">Throughput</text>
<rect x="841" y="738" width="493" height="394" fill="#ebebeb"/>
<rect x="840" y="736" width="489" height="390" fill="#e0e0e0"/>
<rect x="838" y="734" width="486" height="387" fill="#ffffff"/>
<rect x="839" y="735" width="484" height="385" fill="none" stroke="#0a6ee8" stroke-width="2"/>
<text x="851.8" y="758.7" font-size="13" fill="#000" font-weight="bold" textLength="251.37" lengthAdjust="spacingAndGlyphs">User Defined Data Points - Whole Load...</text>
<line x1="1251" y1="751" x2="1264.7" y2="751" stroke="#5a5a5a" stroke-width="2"/>
<line x1="1251" y1="756" x2="1264.7" y2="756" stroke="#5a5a5a" stroke-width="2"/>
<line x1="1251" y1="760.7" x2="1264.7" y2="760.7" stroke="#5a5a5a" stroke-width="2"/>
<path d="M1274 755.2 V750.2 H1279 M1281 750.2 H1286 V755.2 M1286 757.2 V762.2 H1281 M1279 762.2 H1274 V757.2" fill="none" stroke="#5a5a5a" stroke-width="2"/>
<path d="M1295.9 749.7 L1308.1000000000001 761.9000000000001 M1308.1000000000001 749.7 L1295.9 761.9000000000001" fill="none" stroke="#5a5a5a" stroke-width="2"/>
<line x1="874.4" y1="789.4" x2="1321.3" y2="789.4" stroke="#cdd6e4" stroke-width="1"/>
<line x1="1320.8" y1="788.9" x2="1320.8" y2="1059.1" stroke="#cdd6e4" stroke-width="1"/>
<line x1="874.4" y1="802.2" x2="1321.3" y2="802.2" stroke="#cdd6e4" stroke-width="1"/>
<line x1="874.4" y1="887.3" x2="1321.3" y2="887.3" stroke="#cdd6e4" stroke-width="1"/>
<line x1="874.4" y1="973.4" x2="1321.3" y2="973.4" stroke="#cdd6e4" stroke-width="1"/>
<line x1="874.4" y1="1059.1" x2="1321.3" y2="1059.1" stroke="#cdd6e4" stroke-width="1"/>
<line x1="871.6" y1="802.2" x2="874.4" y2="802.2" stroke="#2b4b85" stroke-width="1.2"/>
<line x1="871.6" y1="819.3000000000001" x2="874.4" y2="819.3000000000001" stroke="#2b4b85" stroke-width="1.2"/>
<line x1="871.6" y1="836.4000000000001" x2="874.4" y2="836.4000000000001" stroke="#2b4b85" stroke-width="1.2"/>
<line x1="871.6" y1="853.5" x2="874.4" y2="853.5" stroke="#2b4b85" stroke-width="1.2"/>
<line x1="871.6" y1="870.6" x2="874.4" y2="870.6" stroke="#2b4b85" stroke-width="1.2"/>
<line x1="871.6" y1="887.7" x2="874.4" y2="887.7" stroke="#2b4b85" stroke-width="1.2"/>
<line x1="871.6" y1="904.8000000000001" x2="874.4" y2="904.8000000000001" stroke="#2b4b85" stroke-width="1.2"/>
<line x1="871.6" y1="921.9000000000001" x2="874.4" y2="921.9000000000001" stroke="#2b4b85" stroke-width="1.2"/>
<line x1="871.6" y1="939.0" x2="874.4" y2="939.0" stroke="#2b4b85" stroke-width="1.2"/>
<line x1="871.6" y1="956.1" x2="874.4" y2="956.1" stroke="#2b4b85" stroke-width="1.2"/>
<line x1="871.6" y1="973.2" x2="874.4" y2="973.2" stroke="#2b4b85" stroke-width="1.2"/>
<line x1="871.6" y1="990.3000000000001" x2="874.4" y2="990.3000000000001" stroke="#2b4b85" stroke-width="1.2"/>
<line x1="871.6" y1="1007.4000000000001" x2="874.4" y2="1007.4000000000001" stroke="#2b4b85" stroke-width="1.2"/>
<line x1="871.6" y1="1024.5" x2="874.4" y2="1024.5" stroke="#2b4b85" stroke-width="1.2"/>
<line x1="871.6" y1="1041.6000000000001" x2="874.4" y2="1041.6000000000001" stroke="#2b4b85" stroke-width="1.2"/>
<line x1="871.6" y1="1058.7" x2="874.4" y2="1058.7" stroke="#2b4b85" stroke-width="1.2"/>
<line x1="868.9" y1="802.2" x2="874.4" y2="802.2" stroke="#2b4b85" stroke-width="1.4"/>
<text x="863.9" y="806.5" font-size="12.3" fill="#22396a" text-anchor="end" textLength="19.09" lengthAdjust="spacingAndGlyphs" stroke="#22396a" stroke-width="0.15">600</text>
<line x1="868.9" y1="887.3" x2="874.4" y2="887.3" stroke="#2b4b85" stroke-width="1.4"/>
<text x="863.9" y="891.5999999999999" font-size="12.3" fill="#22396a" text-anchor="end" textLength="19.09" lengthAdjust="spacingAndGlyphs" stroke="#22396a" stroke-width="0.15">400</text>
<line x1="868.9" y1="973.4" x2="874.4" y2="973.4" stroke="#2b4b85" stroke-width="1.4"/>
<text x="863.9" y="977.6999999999999" font-size="12.3" fill="#22396a" text-anchor="end" textLength="19.09" lengthAdjust="spacingAndGlyphs" stroke="#22396a" stroke-width="0.15">200</text>
<line x1="868.9" y1="1059.1" x2="874.4" y2="1059.1" stroke="#2b4b85" stroke-width="1.4"/>
<text x="863.9" y="1063.3999999999999" font-size="12.3" fill="#22396a" text-anchor="end" textLength="6.36" lengthAdjust="spacingAndGlyphs" stroke="#22396a" stroke-width="0.15">0</text>
<line x1="886.4" y1="1059.1" x2="886.4" y2="1062.1" stroke="#2b4b85" stroke-width="1.2"/>
<line x1="929.04" y1="1059.1" x2="929.04" y2="1062.1" stroke="#2b4b85" stroke-width="1.2"/>
<line x1="971.68" y1="1059.1" x2="971.68" y2="1062.1" stroke="#2b4b85" stroke-width="1.2"/>
<line x1="1014.3199999999999" y1="1059.1" x2="1014.3199999999999" y2="1062.1" stroke="#2b4b85" stroke-width="1.2"/>
<line x1="1056.96" y1="1059.1" x2="1056.96" y2="1062.1" stroke="#2b4b85" stroke-width="1.2"/>
<line x1="1099.6" y1="1059.1" x2="1099.6" y2="1062.1" stroke="#2b4b85" stroke-width="1.2"/>
<line x1="1142.24" y1="1059.1" x2="1142.24" y2="1062.1" stroke="#2b4b85" stroke-width="1.2"/>
<line x1="1184.88" y1="1059.1" x2="1184.88" y2="1062.1" stroke="#2b4b85" stroke-width="1.2"/>
<line x1="1227.52" y1="1059.1" x2="1227.52" y2="1062.1" stroke="#2b4b85" stroke-width="1.2"/>
<line x1="1270.1599999999999" y1="1059.1" x2="1270.1599999999999" y2="1062.1" stroke="#2b4b85" stroke-width="1.2"/>
<line x1="1312.8" y1="1059.1" x2="1312.8" y2="1062.1" stroke="#2b4b85" stroke-width="1.2"/>
<line x1="886.4" y1="1059.1" x2="886.4" y2="1064.6" stroke="#2b4b85" stroke-width="1.4"/>
<text x="886.4" y="1079.0" font-size="12.3" fill="#22396a" text-anchor="middle" textLength="38.17" lengthAdjust="spacingAndGlyphs" stroke="#22396a" stroke-width="0.15">0:00:00</text>
<line x1="1099.6" y1="1059.1" x2="1099.6" y2="1064.6" stroke="#2b4b85" stroke-width="1.4"/>
<text x="1099.6" y="1079.0" font-size="12.3" fill="#22396a" text-anchor="middle" textLength="38.17" lengthAdjust="spacingAndGlyphs" stroke="#22396a" stroke-width="0.15">0:01:00</text>
<line x1="1312.1" y1="1059.1" x2="1312.1" y2="1064.6" stroke="#2b4b85" stroke-width="1.4"/>
<text x="1296.72" y="1079.0" font-size="12.3" fill="#22396a" text-anchor="middle" textLength="38.17" lengthAdjust="spacingAndGlyphs" stroke="#22396a" stroke-width="0.15">0:02:00</text>
<line x1="874.4" y1="788.9" x2="874.4" y2="1059.8" stroke="#2b4b85" stroke-width="1.4"/>
<line x1="871.6" y1="789.4" x2="874.4" y2="789.4" stroke="#2b4b85" stroke-width="1.3"/>
<line x1="868.9" y1="1059.1" x2="1321.3" y2="1059.1" stroke="#2b4b85" stroke-width="1.4"/>
<g><path d="M900.4 860.3 L971.4 898.9 L993.6 891.4 L1064.4 921.1 L1099.2 911.2 L1113.2 814.5 L1185.7 917.0 L1241.3 879.1" fill="none" stroke="#d0b44a" stroke-width="2.2" stroke-linejoin="round"/><circle cx="900.4" cy="860.3" r="2.8" fill="#d0b44a"/><circle cx="971.4" cy="898.9" r="2.8" fill="#d0b44a"/><circle cx="993.6" cy="891.4" r="2.8" fill="#d0b44a"/><circle cx="1064.4" cy="921.1" r="2.8" fill="#d0b44a"/><circle cx="1099.2" cy="911.2" r="2.8" fill="#d0b44a"/><circle cx="1113.2" cy="814.5" r="2.8" fill="#d0b44a"/><circle cx="1185.7" cy="917.0" r="2.8" fill="#d0b44a"/><circle cx="1241.3" cy="879.1" r="2.8" fill="#d0b44a"/></g>
<rect x="853.2" y="1093.2" width="13" height="13" fill="#d0b048" stroke="#808080" stroke-width="2"/>
<rect x="856.2" y="1096.2" width="7" height="7" fill="#5a4c20"/>
<text x="876.1" y="1102.6" font-size="13" fill="#000" textLength="130.5" lengthAdjust="spacingAndGlyphs" stroke="#000" stroke-width="0.25">first token latency(ms)</text>
<rect x="1019.1" y="1093.2" width="13" height="13" fill="#4a18a8" stroke="#000" stroke-width="2"/>
<text x="1042.2" y="1102.6" font-size="13" fill="#000" textLength="127" lengthAdjust="spacingAndGlyphs" stroke="#000" stroke-width="0.25">per token latency(ms)</text>
<rect x="1346" y="735" width="492.75" height="393.5" fill="#e6e6e6"/>
<rect x="1345" y="734" width="490" height="391" fill="#c9c9c9"/>
<rect x="1345" y="734" width="488" height="389" fill="#ffffff"/>
<text x="1358.8" y="758.7" font-size="13" fill="#000" font-weight="bold" textLength="218.15" lengthAdjust="spacingAndGlyphs">User Defined Data Points - Copy -...</text>
<line x1="1758" y1="750" x2="1771.7" y2="750" stroke="#5a5a5a" stroke-width="2"/>
<line x1="1758" y1="755" x2="1771.7" y2="755" stroke="#5a5a5a" stroke-width="2"/>
<line x1="1758" y1="759.7" x2="1771.7" y2="759.7" stroke="#5a5a5a" stroke-width="2"/>
<path d="M1781 754.2 V749.2 H1786 M1788 749.2 H1793 V754.2 M1793 756.2 V761.2 H1788 M1786 761.2 H1781 V756.2" fill="none" stroke="#5a5a5a" stroke-width="2"/>
<path d="M1802.9 748.7 L1815.1000000000001 760.9000000000001 M1815.1000000000001 748.7 L1802.9 760.9000000000001" fill="none" stroke="#5a5a5a" stroke-width="2"/>
<line x1="1374.4" y1="789.4" x2="1827.3" y2="789.4" stroke="#cdd6e4" stroke-width="1"/>
<line x1="1826.8" y1="788.9" x2="1826.8" y2="1059.1" stroke="#cdd6e4" stroke-width="1"/>
<line x1="1374.4" y1="808.4" x2="1827.3" y2="808.4" stroke="#cdd6e4" stroke-width="1"/>
<line x1="1374.4" y1="871.3" x2="1827.3" y2="871.3" stroke="#cdd6e4" stroke-width="1"/>
<line x1="1374.4" y1="934.2" x2="1827.3" y2="934.2" stroke="#cdd6e4" stroke-width="1"/>
<line x1="1374.4" y1="996.4" x2="1827.3" y2="996.4" stroke="#cdd6e4" stroke-width="1"/>
<line x1="1374.4" y1="1059.1" x2="1827.3" y2="1059.1" stroke="#cdd6e4" stroke-width="1"/>
<line x1="1371.6000000000001" y1="795.86" x2="1374.4" y2="795.86" stroke="#2b4b85" stroke-width="1.2"/>
<line x1="1371.6000000000001" y1="808.4" x2="1374.4" y2="808.4" stroke="#2b4b85" stroke-width="1.2"/>
<line x1="1371.6000000000001" y1="820.9399999999999" x2="1374.4" y2="820.9399999999999" stroke="#2b4b85" stroke-width="1.2"/>
<line x1="1371.6000000000001" y1="833.48" x2="1374.4" y2="833.48" stroke="#2b4b85" stroke-width="1.2"/>
<line x1="1371.6000000000001" y1="846.02" x2="1374.4" y2="846.02" stroke="#2b4b85" stroke-width="1.2"/>
<line x1="1371.6000000000001" y1="858.56" x2="1374.4" y2="858.56" stroke="#2b4b85" stroke-width="1.2"/>
<line x1="1371.6000000000001" y1="871.1" x2="1374.4" y2="871.1" stroke="#2b4b85" stroke-width="1.2"/>
<line x1="1371.6000000000001" y1="883.64" x2="1374.4" y2="883.64" stroke="#2b4b85" stroke-width="1.2"/>
<line x1="1371.6000000000001" y1="896.18" x2="1374.4" y2="896.18" stroke="#2b4b85" stroke-width="1.2"/>
<line x1="1371.6000000000001" y1="908.72" x2="1374.4" y2="908.72" stroke="#2b4b85" stroke-width="1.2"/>
<line x1="1371.6000000000001" y1="921.26" x2="1374.4" y2="921.26" stroke="#2b4b85" stroke-width="1.2"/>
<line x1="1371.6000000000001" y1="933.8" x2="1374.4" y2="933.8" stroke="#2b4b85" stroke-width="1.2"/>
<line x1="1371.6000000000001" y1="946.3399999999999" x2="1374.4" y2="946.3399999999999" stroke="#2b4b85" stroke-width="1.2"/>
<line x1="1371.6000000000001" y1="958.88" x2="1374.4" y2="958.88" stroke="#2b4b85" stroke-width="1.2"/>
<line x1="1371.6000000000001" y1="971.42" x2="1374.4" y2="971.42" stroke="#2b4b85" stroke-width="1.2"/>
<line x1="1371.6000000000001" y1="983.96" x2="1374.4" y2="983.96" stroke="#2b4b85" stroke-width="1.2"/>
<line x1="1371.6000000000001" y1="996.5" x2="1374.4" y2="996.5" stroke="#2b4b85" stroke-width="1.2"/>
<line x1="1371.6000000000001" y1="1009.04" x2="1374.4" y2="1009.04" stroke="#2b4b85" stroke-width="1.2"/>
<line x1="1371.6000000000001" y1="1021.5799999999999" x2="1374.4" y2="1021.5799999999999" stroke="#2b4b85" stroke-width="1.2"/>
<line x1="1371.6000000000001" y1="1034.12" x2="1374.4" y2="1034.12" stroke="#2b4b85" stroke-width="1.2"/>
<line x1="1371.6000000000001" y1="1046.6599999999999" x2="1374.4" y2="1046.6599999999999" stroke="#2b4b85" stroke-width="1.2"/>
<line x1="1371.6000000000001" y1="1059.2" x2="1374.4" y2="1059.2" stroke="#2b4b85" stroke-width="1.2"/>
<line x1="1368.9" y1="808.4" x2="1374.4" y2="808.4" stroke="#2b4b85" stroke-width="1.4"/>
<text x="1363.9" y="812.6999999999999" font-size="12.3" fill="#22396a" text-anchor="end" textLength="12.72" lengthAdjust="spacingAndGlyphs" stroke="#22396a" stroke-width="0.15">40</text>
<line x1="1368.9" y1="871.3" x2="1374.4" y2="871.3" stroke="#2b4b85" stroke-width="1.4"/>
<text x="1363.9" y="875.5999999999999" font-size="12.3" fill="#22396a" text-anchor="end" textLength="12.72" lengthAdjust="spacingAndGlyphs" stroke="#22396a" stroke-width="0.15">30</text>
<line x1="1368.9" y1="934.2" x2="1374.4" y2="934.2" stroke="#2b4b85" stroke-width="1.4"/>
<text x="1363.9" y="938.5" font-size="12.3" fill="#22396a" text-anchor="end" textLength="12.72" lengthAdjust="spacingAndGlyphs" stroke="#22396a" stroke-width="0.15">20</text>
<line x1="1368.9" y1="996.4" x2="1374.4" y2="996.4" stroke="#2b4b85" stroke-width="1.4"/>
<text x="1363.9" y="1000.6999999999999" font-size="12.3" fill="#22396a" text-anchor="end" textLength="12.72" lengthAdjust="spacingAndGlyphs" stroke="#22396a" stroke-width="0.15">10</text>
<line x1="1368.9" y1="1059.1" x2="1374.4" y2="1059.1" stroke="#2b4b85" stroke-width="1.4"/>
<text x="1363.9" y="1063.3999999999999" font-size="12.3" fill="#22396a" text-anchor="end" textLength="6.36" lengthAdjust="spacingAndGlyphs" stroke="#22396a" stroke-width="0.15">0</text>
<line x1="1386.4" y1="1059.1" x2="1386.4" y2="1062.1" stroke="#2b4b85" stroke-width="1.2"/>
<line x1="1429.6000000000001" y1="1059.1" x2="1429.6000000000001" y2="1062.1" stroke="#2b4b85" stroke-width="1.2"/>
<line x1="1472.8000000000002" y1="1059.1" x2="1472.8000000000002" y2="1062.1" stroke="#2b4b85" stroke-width="1.2"/>
<line x1="1516.0" y1="1059.1" x2="1516.0" y2="1062.1" stroke="#2b4b85" stroke-width="1.2"/>
<line x1="1559.2" y1="1059.1" x2="1559.2" y2="1062.1" stroke="#2b4b85" stroke-width="1.2"/>
<line x1="1602.4" y1="1059.1" x2="1602.4" y2="1062.1" stroke="#2b4b85" stroke-width="1.2"/>
<line x1="1645.6000000000001" y1="1059.1" x2="1645.6000000000001" y2="1062.1" stroke="#2b4b85" stroke-width="1.2"/>
<line x1="1688.8000000000002" y1="1059.1" x2="1688.8000000000002" y2="1062.1" stroke="#2b4b85" stroke-width="1.2"/>
<line x1="1732.0" y1="1059.1" x2="1732.0" y2="1062.1" stroke="#2b4b85" stroke-width="1.2"/>
<line x1="1775.2" y1="1059.1" x2="1775.2" y2="1062.1" stroke="#2b4b85" stroke-width="1.2"/>
<line x1="1818.4" y1="1059.1" x2="1818.4" y2="1062.1" stroke="#2b4b85" stroke-width="1.2"/>
<line x1="1386.4" y1="1059.1" x2="1386.4" y2="1064.6" stroke="#2b4b85" stroke-width="1.4"/>
<text x="1386.4" y="1079.0" font-size="12.3" fill="#22396a" text-anchor="middle" textLength="38.17" lengthAdjust="spacingAndGlyphs" stroke="#22396a" stroke-width="0.15">0:00:00</text>
<line x1="1602.4" y1="1059.1" x2="1602.4" y2="1064.6" stroke="#2b4b85" stroke-width="1.4"/>
<text x="1602.4" y="1079.0" font-size="12.3" fill="#22396a" text-anchor="middle" textLength="38.17" lengthAdjust="spacingAndGlyphs" stroke="#22396a" stroke-width="0.15">0:01:00</text>
<line x1="1818" y1="1059.1" x2="1818" y2="1064.6" stroke="#2b4b85" stroke-width="1.4"/>
<text x="1802.72" y="1079.0" font-size="12.3" fill="#22396a" text-anchor="middle" textLength="38.17" lengthAdjust="spacingAndGlyphs" stroke="#22396a" stroke-width="0.15">0:02:00</text>
<line x1="1374.4" y1="788.9" x2="1374.4" y2="1059.8" stroke="#2b4b85" stroke-width="1.4"/>
<line x1="1371.6000000000001" y1="789.4" x2="1374.4" y2="789.4" stroke="#2b4b85" stroke-width="1.3"/>
<line x1="1368.9" y1="1059.1" x2="1827.3" y2="1059.1" stroke="#2b4b85" stroke-width="1.4"/>
<g><path d="M1401.4 923.6 L1422.3 946.5 L1437.3 899.6 L1458.5 814.5 L1473.2 899.6 L1494.4 826.5 L1509.4 909.6 L1530.6 846.7 L1545.3 851.8 L1566.2 901.3 L1581.5 960.5 L1602.4 922.5 L1617.1 864.4 L1638.6 916.4 L1653.3 913.3 L1674.5 865.5 L1689.2 938.6 L1710.4 935.5 L1725.4 912.3 L1746.3 835.4 L1761.3 980.3 L1782.5 980.3" fill="none" stroke="#4a1ea0" stroke-width="1.3" stroke-linejoin="round"/><circle cx="1401.4" cy="923.6" r="2.6" fill="#4a1ea0"/><circle cx="1422.3" cy="946.5" r="2.6" fill="#4a1ea0"/><circle cx="1437.3" cy="899.6" r="2.6" fill="#4a1ea0"/><circle cx="1458.5" cy="814.5" r="2.6" fill="#4a1ea0"/><circle cx="1473.2" cy="899.6" r="2.6" fill="#4a1ea0"/><circle cx="1494.4" cy="826.5" r="2.6" fill="#4a1ea0"/><circle cx="1509.4" cy="909.6" r="2.6" fill="#4a1ea0"/><circle cx="1530.6" cy="846.7" r="2.6" fill="#4a1ea0"/><circle cx="1545.3" cy="851.8" r="2.6" fill="#4a1ea0"/><circle cx="1566.2" cy="901.3" r="2.6" fill="#4a1ea0"/><circle cx="1581.5" cy="960.5" r="2.6" fill="#4a1ea0"/><circle cx="1602.4" cy="922.5" r="2.6" fill="#4a1ea0"/><circle cx="1617.1" cy="864.4" r="2.6" fill="#4a1ea0"/><circle cx="1638.6" cy="916.4" r="2.6" fill="#4a1ea0"/><circle cx="1653.3" cy="913.3" r="2.6" fill="#4a1ea0"/><circle cx="1674.5" cy="865.5" r="2.6" fill="#4a1ea0"/><circle cx="1689.2" cy="938.6" r="2.6" fill="#4a1ea0"/><circle cx="1710.4" cy="935.5" r="2.6" fill="#4a1ea0"/><circle cx="1725.4" cy="912.3" r="2.6" fill="#4a1ea0"/><circle cx="1746.3" cy="835.4" r="2.6" fill="#4a1ea0"/><circle cx="1761.3" cy="980.3" r="2.6" fill="#4a1ea0"/><circle cx="1782.5" cy="980.3" r="2.6" fill="#4a1ea0"/></g>
<rect x="1359.1" y="1093.2" width="13" height="13" fill="#d0b048" stroke="#000" stroke-width="2"/>
<text x="1382.3" y="1102.6" font-size="13" fill="#000" textLength="130.5" lengthAdjust="spacingAndGlyphs" stroke="#000" stroke-width="0.25">first token latency(ms)</text>
<rect x="1525" y="1093.4" width="13" height="13" fill="#4a18a8" stroke="#0877ea" stroke-width="2"/>
<path d="M1528 1099.7 L1530.6 1102.6000000000001 L1535 1096.7" fill="none" stroke="#fff" stroke-width="1.7"/>
<text x="1548" y="1102.6" font-size="13" fill="#000" textLength="127.2" lengthAdjust="spacingAndGlyphs" stroke="#000" stroke-width="0.25">per token latency(ms)</text>
<rect x="0" y="1146" width="1857" height="54" fill="#f0f0f0"/>
<rect x="3" y="1153" width="199" height="23" fill="#f0f0f0"/>
<line x1="0" y1="1153.5" x2="201" y2="1153.5" stroke="#000" stroke-width="1"/>
<line x1="4" y1="1154.5" x2="201" y2="1154.5" stroke="#ffffff" stroke-width="1"/>
<line x1="3.5" y1="1154" x2="3.5" y2="1175" stroke="#ffffff" stroke-width="1"/>
<line x1="5" y1="1175.5" x2="202" y2="1175.5" stroke="#000" stroke-width="1.2"/>
<text x="112.7" y="1169" font-size="13" fill="#000" text-anchor="middle" textLength="42" lengthAdjust="spacingAndGlyphs">Design</text>
<line x1="202" y1="1177" x2="404" y2="1177" stroke="#000" stroke-width="1.3"/>
<line x1="404" y1="1153" x2="404" y2="1177.5" stroke="#000" stroke-width="1.3"/>
<line x1="404" y1="1153.5" x2="1857" y2="1153.5" stroke="#000" stroke-width="1.2"/>
<line x1="404" y1="1176.5" x2="1857" y2="1176.5" stroke="#a0a0a0" stroke-width="1"/>
<text x="311.6" y="1169.6" font-size="13" fill="#000" text-anchor="middle" textLength="23.5" lengthAdjust="spacingAndGlyphs">Run</text>
<line x1="994.5" y1="1180" x2="994.5" y2="1200" stroke="#a0a0a0" stroke-width="1"/>
<line x1="994" y1="1180.5" x2="1139" y2="1180.5" stroke="#a0a0a0" stroke-width="1"/>
<line x1="1138.5" y1="1181" x2="1138.5" y2="1200" stroke="#ffffff" stroke-width="1"/>
<line x1="1142.5" y1="1180" x2="1142.5" y2="1200" stroke="#a0a0a0" stroke-width="1"/>
<line x1="1142" y1="1180.5" x2="1222" y2="1180.5" stroke="#a0a0a0" stroke-width="1"/>
<line x1="1221.5" y1="1181" x2="1221.5" y2="1200" stroke="#ffffff" stroke-width="1"/>
<line x1="1225.5" y1="1180" x2="1225.5" y2="1200" stroke="#a0a0a0" stroke-width="1"/>
<line x1="1225" y1="1180.5" x2="1460.5" y2="1180.5" stroke="#a0a0a0" stroke-width="1"/>
<line x1="1460.0" y1="1181" x2="1460.0" y2="1200" stroke="#ffffff" stroke-width="1"/>
<line x1="1463.5" y1="1180" x2="1463.5" y2="1200" stroke="#a0a0a0" stroke-width="1"/>
<line x1="1463" y1="1180.5" x2="1698.4" y2="1180.5" stroke="#a0a0a0" stroke-width="1"/>
<line x1="1697.9" y1="1181" x2="1697.9" y2="1200" stroke="#ffffff" stroke-width="1"/>
<line x1="1701.3" y1="1180" x2="1701.3" y2="1200" stroke="#a0a0a0" stroke-width="1"/>
<line x1="1700.8" y1="1180.5" x2="1860" y2="1180.5" stroke="#a0a0a0" stroke-width="1"/>
<line x1="1859.5" y1="1181" x2="1859.5" y2="1200" stroke="#ffffff" stroke-width="1"/>
<g><rect x="1465.5" y="1183.5" width="8" height="10" fill="#fff" stroke="#000" stroke-width="1"/><path d="M1468 1194 L1470 1189 H1480 L1478 1195 H1468 Z" fill="#e8d040" stroke="#000" stroke-width="1"/><path d="M1475 1185 Q1479 1184 1480 1188" fill="none" stroke="#1a3ab0" stroke-width="1.3"/></g>
<text x="1485" y="1194" font-size="11.5" fill="#000" textLength="95" lengthAdjust="spacingAndGlyphs">Auto Collate Results</text>
</svg>
</body></html>
